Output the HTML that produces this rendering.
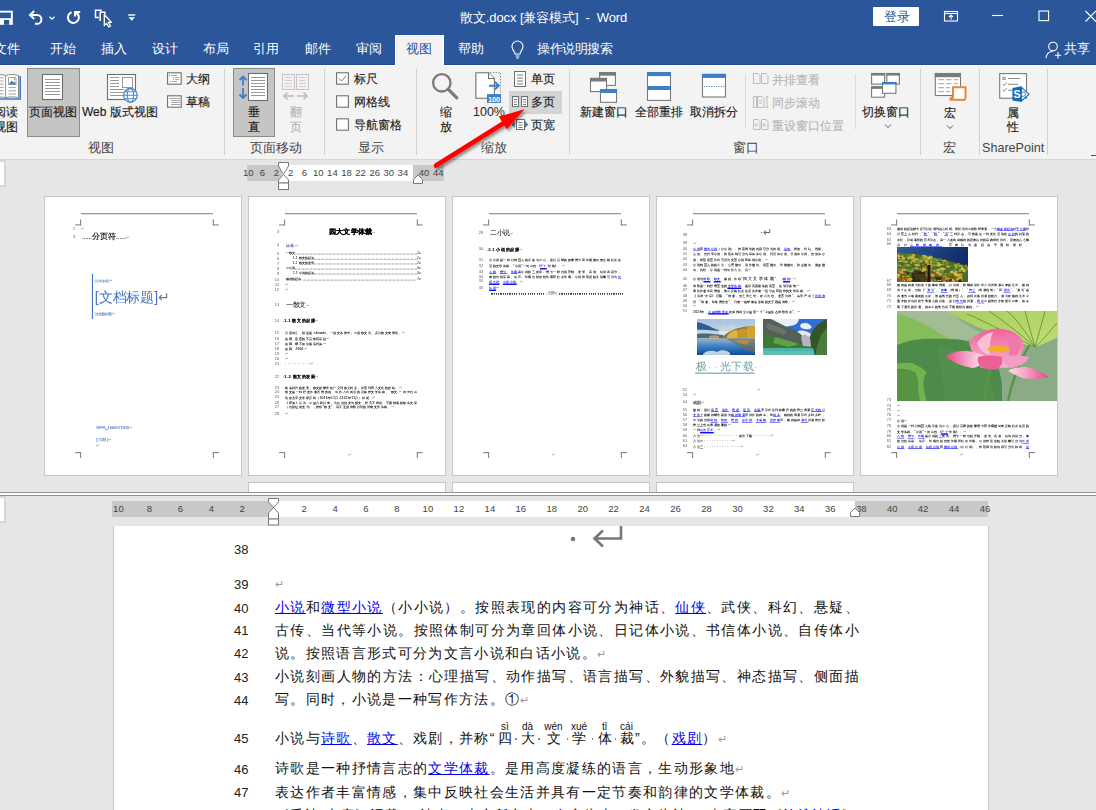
<!DOCTYPE html>
<html><head><meta charset="utf-8">
<style>
*{margin:0;padding:0;box-sizing:border-box}
html,body{width:1096px;height:810px;overflow:hidden;background:#e6e6e6;font-family:"Liberation Sans",sans-serif;position:relative}
.a{position:absolute}
.t{position:absolute;white-space:nowrap;line-height:1}
#title{left:0;top:0;width:1096px;height:65px;background:#2b579a;border-bottom:1px solid #1f4c92}
#ribbon{left:0;top:65px;width:1096px;height:95px;background:#f3f3f3;border-top:1px solid #fcfcfc;border-bottom:1px solid #d5d5d5}
.tab{position:absolute;top:43px;color:#fff;font-size:12.6px;line-height:13px;letter-spacing:-0.5px;white-space:nowrap}
.rl{position:absolute;font-size:12px;line-height:12px;color:#1a1a1a;white-space:nowrap;-webkit-text-stroke:0.15px currentColor}
.gl{position:absolute;font-size:12.6px;line-height:13px;color:#444;white-space:nowrap;top:142px}
.sep{position:absolute;top:69px;width:1px;height:86px;background:#d2d2d2}
.dis{color:#b5b5b5}
.page{position:absolute;background:#fff;border:1px solid #c6c6c6}
.rn{position:absolute;width:20px;text-align:center;font-size:9.5px;line-height:10px;color:#444;font-family:"Liberation Sans",sans-serif}
.ln{position:absolute;left:198px;width:50.5px;text-align:right;font-size:13px;line-height:13px;color:#222;margin-top:0.5px}
.dl{position:absolute;left:275px;font-size:14px;line-height:15px;letter-spacing:1.33px;color:#111;white-space:nowrap}
.dl.j{width:585px;text-align:justify;text-align-last:justify;white-space:normal;height:15px;overflow:hidden}
.lk{color:#0000ee;text-decoration:underline;text-underline-offset:1px}
.rt{color:#9a9a9a;font-size:11px}
.py{position:absolute;font-size:10px;line-height:10px;color:#111;transform:translateX(-50%);white-space:nowrap}
/*MINICSS*/
.mp{position:absolute;top:197px;width:196px;height:278px;overflow:hidden}
.sc{position:absolute;left:0;top:0;width:874px;height:1239px;transform:scale(0.2243);transform-origin:0 0}
.hl{position:absolute;left:160px;top:72px;width:589px;height:5px;background:#888}
.cm{position:absolute;width:27px;height:27px}
.mn{position:absolute;left:74px;width:60px;text-align:right;font-size:17px;line-height:16px;color:#555}
.ml{position:absolute;white-space:nowrap;line-height:1.15;letter-spacing:1.33px;color:#000;-webkit-text-stroke:0.25px currentColor}
.mp .lk{text-decoration:none;border-bottom:6px solid #0000ee}
.mp .rt{-webkit-text-stroke:0;color:#888;font-size:16px}
.ml.j{width:589px;text-align:justify;text-align-last:justify;white-space:normal;height:18px;overflow:hidden}
.toc{display:flex;align-items:flex-end}
.toc .dots{flex:1;border-bottom:3px dotted #333;margin:0 2px 3px}
/*ENDMINICSS*/
</style></head><body>
<!-- TITLE BAR -->
<div id="title" class="a"></div>
<div id="ribbon" class="a"></div>

<!-- QAT -->
<svg class="a" style="left:0;top:0" width="140" height="32" viewBox="0 0 140 32">
 <path d="M-3 10.7 H12.8 V24.8 H-3 Z" fill="#fff"/>
 <rect x="-3" y="12.6" width="13.9" height="5.6" fill="#2b579a"/>
 <rect x="4" y="20" width="5.2" height="4.8" fill="#2b579a"/>
 <rect x="-3" y="20" width="1.5" height="4.8" fill="#2b579a"/>
 <g fill="none" stroke="#fff" stroke-width="2">
  <path d="M30.5 15 H37 A4.4 4.4 0 0 1 37 23.8 H35"/>
  <path d="M34.2 11 L30 15 L34.2 19"/>
  <path d="M71.6 12.2 A5.5 5.5 0 1 0 77.3 13.5"/>
 </g>
 <path d="M49.5 16.8 L52 19.2 L54.5 16.8" fill="none" stroke="#fff" stroke-width="1.2"/>
 <path d="M80.2 12 H75 V16.6 M75 12 L78.2 15.2" fill="none" stroke="#fff" stroke-width="1.9"/>
 <g fill="none" stroke="#fff" stroke-width="1.5">
  <path d="M101 11.5 V10.2 H95.5 V17.5 H99"/>
  <path d="M100.2 21 V12.2 H104.8 V14.5"/>
 </g>
 <path d="M104.3 14.5 V25.5 L106.5 23.4 L108.8 27 L110.6 26 L108.3 22.4 H111.4 Z" fill="#2b579a" stroke="#fff" stroke-width="1.3" stroke-linejoin="round"/>
 <path d="M128.2 15 H135.2" stroke="#fff" stroke-width="1.4"/>
 <path d="M128.5 17.3 H135 L131.75 20.8 Z" fill="#fff"/>
</svg>
<div class="t" style="left:460px;top:11px;font-size:13px;color:#fff;letter-spacing:-0.1px">散文.docx [兼容模式]&nbsp; - &nbsp;Word</div>
<div class="a" style="left:873px;top:7px;width:46px;height:19px;background:#fff;border-radius:1px"></div>
<div class="t" style="left:884px;top:10px;font-size:13px;color:#2b579a">登录</div>
<svg class="a" style="left:930px;top:0" width="166" height="32" viewBox="930 0 166 32">
 <g fill="none" stroke="#fff" stroke-width="1.1">
  <rect x="944.5" y="11.5" width="13" height="9.5"/>
  <path d="M944.5 13.5 H957.5"/>
  <path d="M951 19.5 V15.5 M949 17 L951 15 L953 17"/>
  <path d="M992 15.5 H1003"/>
  <rect x="1039" y="11" width="9.6" height="9.6"/>
  <path d="M1085.5 11 L1096 21.5 M1096 11 L1085.5 21.5"/>
 </g>
</svg>

<!-- RIBBON: View group -->
<svg class="a" style="left:0;top:68px" width="24" height="36" viewBox="0 68 24 36">
 <path d="M-8 75.5 C-3 74.2 2 74.2 5.6 75.6 C9 74.2 14 74.2 18.5 75.5 V97.6 C14 96.6 9 96.6 5.6 97.8 C2 96.6 -3 96.6 -8 97.6 Z" fill="#fff" stroke="#7a7a7a" stroke-width="0.9"/>
 <path d="M5.6 75.6 V97.8" stroke="#8a8a8a" stroke-width="0.9"/>
 <path d="M20.2 76 V99 H-8" fill="none" stroke="#3e7fc4" stroke-width="1.6"/>
 <rect x="8.6" y="77.6" width="7.4" height="7" fill="#fff" stroke="#8a8a8a" stroke-width="0.8"/>
 <path d="M9 84.2 L11.6 80.6 L13.4 82.4 L14.6 81.4 L15.8 84.2 Z" fill="#3e7fc4"/>
 <circle cx="14.6" cy="79.2" r="0.9" fill="#f0a030"/>
 <path d="M8.6 87.6 H16 M8.6 90.8 H16 M8.6 94 H16 M-3 77.8 H3.6 M-3 81 H3.6 M-3 84.2 H3.6 M-3 87.4 H3.6 M-3 90.6 H3.6 M-3 93.8 H3.6" stroke="#8a8a8a" stroke-width="0.8"/>
</svg>
<div class="rl" style="left:-6px;top:106px">阅读</div>
<div class="rl" style="left:-6px;top:121px">视图</div>
<div class="a" style="left:27px;top:68px;width:53px;height:69px;background:#c5c5c5;border:1px solid #8c8c8c"></div>
<svg class="a" style="left:40px;top:72px" width="26" height="30" viewBox="40 72 26 30">
 <rect x="42.5" y="74.5" width="20" height="25" fill="#fff" stroke="#6d6d6d" stroke-width="1.1"/>
 <path d="M45 79.5 H60 M45 82.5 H60 M45 85.5 H60 M45 88.5 H60 M45 91.5 H60 M45 94.5 H60" stroke="#999" stroke-width="1"/>
</svg>
<div class="rl" style="left:29px;top:106px">页面视图</div>
<svg class="a" style="left:104px;top:72px" width="36" height="34" viewBox="104 72 36 34">
 <rect x="107.5" y="74.5" width="28" height="25" fill="#fff" stroke="#6d6d6d" stroke-width="1.1"/>
 <rect x="122.5" y="77.5" width="10" height="10" fill="#fff" stroke="#999"/>
 <path d="M110 77.5 H119 M110 80.5 H119 M110 83.5 H119 M110 86.5 H119 M110 89.5 H124 M110 92.5 H124 M110 95.5 H124" stroke="#999"/>
 <circle cx="130.4" cy="95.3" r="6.8" fill="#fff" stroke="#4a86c8" stroke-width="1.3"/>
 <path d="M123.6 95.3 H137.2 M124.8 91.8 H136 M124.8 98.8 H136" stroke="#4a86c8" stroke-width="1.1"/>
 <ellipse cx="130.4" cy="95.3" rx="3.2" ry="6.8" fill="none" stroke="#4a86c8" stroke-width="1.1"/>
</svg>
<div class="rl" style="left:82px;top:106px">Web 版式视图</div>
<svg class="a" style="left:166px;top:71px" width="18" height="40" viewBox="166 71 18 40">
 <rect x="167.6" y="72.8" width="13.6" height="11.4" fill="#fff" stroke="#6d6d6d" stroke-width="1.1"/>
 <g stroke="#8a8a8a" stroke-width="0.8">
  <path d="M171 75.4 H177 M175 77.4 H179 M175 79.4 H179 M172 81.5 H177"/>
  <path d="M169 75.4 H170 M172.8 77.4 H173.8 M172.8 79.4 H173.8 M169.9 81.5 H170.9" stroke-width="1"/>
 </g>
 <rect x="167.6" y="95.8" width="13.6" height="11.4" fill="#fff" stroke="#6d6d6d" stroke-width="1.1"/>
 <path d="M169 98.4 H180 M171 100.4 H180 M171 102.4 H180 M171 104.5 H180" stroke="#8a8a8a" stroke-width="0.8"/>
</svg>
<div class="rl" style="left:186px;top:73px">大纲</div>
<div class="rl" style="left:186px;top:96px">草稿</div>
<div class="gl" style="left:87.5px">视图</div>
<div class="sep" style="left:224px"></div>
<!-- Page movement -->
<div class="a" style="left:233px;top:68px;width:42px;height:69px;background:#c5c5c5;border:1px solid #8c8c8c"></div>
<svg class="a" style="left:236px;top:71px" width="36" height="32" viewBox="236 71 36 32">
 <rect x="248.5" y="73.5" width="19" height="27" fill="#fff" stroke="#6d6d6d" stroke-width="1.1"/>
 <path d="M251 77.5 H265 M251 80.5 H265 M251 83.5 H265 M251 86.5 H265 M251 89.5 H265 M251 92.5 H265 M251 95.5 H265" stroke="#999"/>
 <path d="M243 76.5 V85.5 M243 88 V98 M239.5 80 L243 76.5 L246.5 80 M239.5 94.5 L243 98 L246.5 94.5" fill="none" stroke="#3e7fc4" stroke-width="1.8"/>
</svg>
<div class="rl" style="left:248px;top:106px">垂</div>
<div class="rl" style="left:248px;top:121px">直</div>
<svg class="a" style="left:280px;top:72px" width="32" height="30" viewBox="280 72 32 30">
 <rect x="282.5" y="74.5" width="12" height="15" fill="#f8eff6" stroke="#c4c4c4"/>
 <rect x="296.5" y="74.5" width="12" height="15" fill="#f8eff6" stroke="#c4c4c4"/>
 <path d="M285 77.5 H292 M285 80.5 H292 M285 83.5 H292 M285 86.5 H292 M299 77.5 H306 M299 80.5 H306 M299 83.5 H306 M299 86.5 H306" stroke="#d2d2d2"/>
 <path d="M284 96 H294 M287.5 92.5 L284 96 L287.5 99.5 M297 96 H307 M303.5 92.5 L307 96 L303.5 99.5" fill="none" stroke="#bcbcbc" stroke-width="1.7"/>
</svg>
<div class="rl dis" style="left:290px;top:106px">翻</div>
<div class="rl dis" style="left:290px;top:121px">页</div>
<div class="gl" style="left:249.5px">页面移动</div>
<div class="sep" style="left:324px"></div>
<!-- Show -->
<svg class="a" style="left:335px;top:71px" width="16" height="62" viewBox="335 71 16 62">
 <rect x="336.6" y="72.8" width="11.8" height="11.4" fill="#fff" stroke="#707070" stroke-width="1.1"/>
 <path d="M339 78.5 L341.5 81 L346.3 75.8" fill="none" stroke="#666" stroke-width="0.9"/>
 <rect x="336.6" y="95.8" width="11.8" height="11.4" fill="#fff" stroke="#707070" stroke-width="1.1"/>
 <rect x="336.6" y="118.8" width="11.8" height="11.4" fill="#fff" stroke="#707070" stroke-width="1.1"/>
</svg>
<div class="rl" style="left:354px;top:73px">标尺</div>
<div class="rl" style="left:354px;top:96px">网格线</div>
<div class="rl" style="left:354px;top:119px">导航窗格</div>
<div class="gl" style="left:357.5px">显示</div>
<div class="sep" style="left:416px"></div>
<!-- Zoom -->
<svg class="a" style="left:430px;top:72px" width="32" height="30" viewBox="0 0 32 30">
 <circle cx="11.8" cy="10.8" r="8.7" fill="none" stroke="#7a7a7a" stroke-width="2.3"/>
 <path d="M18.3 17.3 L26.8 25.8" stroke="#7a7a7a" stroke-width="3.3" stroke-linecap="round"/>
</svg>
<div class="rl" style="left:440px;top:106px">缩</div>
<div class="rl" style="left:440px;top:121px">放</div>
<svg class="a" style="left:472px;top:70px" width="32" height="34" viewBox="472 70 32 34">
 <path d="M475.9 72.7 H488.6 L494.4 78.5 V98.2 H475.9 Z" fill="#fff" stroke="#6d6d6d" stroke-width="1.1"/>
 <path d="M488.6 72.7 V78.5 H494.4" fill="#fff" stroke="#6d6d6d" stroke-width="1.1"/>
 <path d="M490 72.6 H500.5 V93" fill="none" stroke="#8a8a8a" stroke-width="1" stroke-dasharray="1.4 1.4"/>
 <path d="M494.4 86 V93" fill="none" stroke="#8a8a8a" stroke-width="1" stroke-dasharray="1.4 1.4"/>
 <path d="M489 85.7 H498 M495 82 L498.8 85.7 L495 89.4" fill="none" stroke="#3e7fc4" stroke-width="1.9"/>
 <rect x="487" y="94.1" width="14" height="8.8" fill="#3e7fc4"/>
 <text x="494" y="101.6" font-size="7.6" fill="#fff" text-anchor="middle" font-family="Liberation Sans" font-weight="bold" letter-spacing="-0.3">100</text>
</svg>
<div class="t" style="left:473px;top:106px;font-size:12.5px;color:#262626">100%</div>
<svg class="a" style="left:512px;top:70px" width="18" height="62" viewBox="0 0 18 62">
 <rect x="2.5" y="1.5" width="11" height="15" fill="#fff" stroke="#6d6d6d"/>
 <path d="M5 5 H11 M5 8 H11 M5 11 H11 M5 14 H11" stroke="#7a7a7a"/>
 <path d="M22 51 H22" stroke="#000"/>
 <path d="M-0.5 54.5 L2.8 51 V58 Z M16.3 54.5 L13 51 V58 Z" fill="#3e7fc4"/>
 <rect x="4.5" y="49.5" width="8" height="10" fill="#fff" stroke="#6d6d6d"/>
 <path d="M6.5 52.5 H10.5 M6.5 55 H10.5 M6.5 57.5 H10.5" stroke="#7a7a7a"/>
</svg>
<div class="a" style="left:509px;top:91px;width:53px;height:23px;background:#d4d4d4"></div>
<svg class="a" style="left:511px;top:95px" width="18" height="13" viewBox="0 0 18 13">
 <rect x="1.5" y="1.5" width="6" height="10" fill="#fff" stroke="#6d6d6d"/>
 <rect x="10.5" y="1.5" width="6" height="10" fill="#fff" stroke="#6d6d6d"/>
 <path d="M3 4.5 H6 M3 7 H6 M3 9.5 H6 M12 4.5 H15 M12 7 H15 M12 9.5 H15" stroke="#7a7a7a"/>
</svg>
<div class="rl" style="left:531px;top:73px">单页</div>
<div class="rl" style="left:531px;top:96px">多页</div>
<div class="rl" style="left:531px;top:119px">页宽</div>
<div class="gl" style="left:480.5px">缩放</div>
<div class="sep" style="left:569px"></div>
<!-- Window -->
<svg class="a" style="left:588px;top:70px" width="32" height="34" viewBox="588 70 32 34">
 <rect x="599.6" y="72.6" width="15.8" height="12.8" fill="#fff" stroke="#7a7a7a" stroke-width="1.1"/>
 <rect x="599.1" y="72.1" width="16.8" height="3.6" fill="#7a7a7a"/>
 <rect x="590.5" y="78.4" width="16" height="13.2" fill="#fff" stroke="#7a7a7a" stroke-width="1.1"/>
 <rect x="590" y="77.9" width="17" height="3.6" fill="#7a7a7a"/>
 <rect x="600.5" y="89.7" width="16" height="12.6" fill="#fff" stroke="#7a7a7a" stroke-width="1.1"/>
 <rect x="600" y="89.2" width="17" height="3.8" fill="#3e7fc4"/>
</svg>
<div class="rl" style="left:580px;top:106px">新建窗口</div>
<svg class="a" style="left:645px;top:70px" width="28" height="32" viewBox="645 70 28 32">
 <rect x="647.5" y="72.6" width="23" height="27.8" fill="#fff" stroke="#7a7a7a" stroke-width="1.1"/>
 <rect x="647" y="72.1" width="24" height="4" fill="#3e7fc4"/>
 <rect x="647" y="86" width="24" height="4" fill="#3e7fc4"/>
</svg>
<div class="rl" style="left:635px;top:106px">全部重排</div>
<svg class="a" style="left:700px;top:72px" width="28" height="28" viewBox="700 72 28 28">
 <rect x="702.5" y="74.4" width="23" height="22.6" fill="#fff" stroke="#7a7a7a" stroke-width="1.1"/>
 <rect x="702" y="73.9" width="24" height="4" fill="#3e7fc4"/>
 <path d="M704 86.5 H725" stroke="#3e7fc4" stroke-width="1" stroke-dasharray="1.1 1.3"/>
</svg>
<div class="rl" style="left:690px;top:106px">取消拆分</div>
<div class="a" style="left:745px;top:74px;width:1px;height:55px;background:#dadada"></div>
<svg class="a" style="left:752px;top:72px" width="18" height="60" viewBox="752 72 18 60">
 <g fill="#f6eff5" stroke="#bdbdbd" stroke-width="1">
  <path d="M753.5 73.5 H758 L760 75.5 V83.5 H753.5 Z"/><path d="M761.5 73.5 H766 L768 75.5 V83.5 H761.5 Z"/>
  <path d="M753.5 96.5 H756.5 V107.5 H753.5 Z"/><path d="M757.5 96.5 H762 L764 98.5 V107.5 H757.5 Z"/>
  <path d="M753.5 119.5 H758 L760 121.5 V129.5 H753.5 Z"/><path d="M761.5 119.5 H766 L768 121.5 V129.5 H761.5 Z"/>
 </g>
 <path d="M759 100.5 H762 M759 103 H762 M767 96 V108 M765.5 97.5 L767 96 L768.5 97.5 M765.5 106.5 L767 108 L768.5 106.5 M754.5 125 H758 M756.2 123.3 V126.7 M762.5 125 H766 M764.2 123.3 V126.7" fill="none" stroke="#bdbdbd" stroke-width="0.9"/>
</svg>
<div class="rl dis" style="left:772px;top:74px">并排查看</div>
<div class="rl dis" style="left:772px;top:97px">同步滚动</div>
<div class="rl dis" style="left:772px;top:120px">重设窗口位置</div>
<div class="gl" style="left:732.5px">窗口</div>
<div class="a" style="left:855px;top:74px;width:1px;height:55px;background:#dadada"></div>
<svg class="a" style="left:869px;top:71px" width="34" height="30" viewBox="869 71 34 30">
 <rect x="871.6" y="73.5" width="13" height="10.6" fill="#fff" stroke="#7a7a7a" stroke-width="1.1"/><rect x="871.1" y="73" width="14" height="2.6" fill="#7a7a7a"/>
 <rect x="886.8" y="73.5" width="12.6" height="10.6" fill="#fff" stroke="#7a7a7a" stroke-width="1.1"/><rect x="886.3" y="73" width="13.6" height="2.6" fill="#7a7a7a"/>
 <rect x="871.6" y="86.8" width="13" height="10.4" fill="#fff" stroke="#7a7a7a" stroke-width="1.1"/><rect x="871.1" y="86.3" width="14" height="2.6" fill="#7a7a7a"/>
 <rect x="882.5" y="82.5" width="13.4" height="10.8" fill="#fff" stroke="#7a7a7a" stroke-width="1.1"/><rect x="882" y="82" width="14.4" height="2.4" fill="#3e7fc4"/>
</svg>
<div class="rl" style="left:862px;top:106px">切换窗口</div>
<svg class="a" style="left:883px;top:123px" width="10" height="6" viewBox="0 0 10 6"><path d="M2 1.5 L5 4.5 L8 1.5" fill="none" stroke="#555"/></svg>
<div class="sep" style="left:920px"></div>
<!-- Macro -->
<svg class="a" style="left:933px;top:71px" width="36" height="32" viewBox="933 71 36 32">
 <rect x="935.3" y="73.5" width="25.2" height="22" fill="#fff" stroke="#7a7a7a" stroke-width="1.1"/>
 <rect x="934.8" y="73" width="26.2" height="4.2" fill="#7a7a7a"/>
 <path d="M938 79.7 H944 M946 79.7 H951.5 M953.5 79.7 H958 M938 83.7 H944 M946 83.7 H951.5 M953.5 83.7 H958 M938 87.7 H944 M946 87.7 H950 M938 91.7 H944 M946 91.7 H950" stroke="#9a9a9a" stroke-width="0.9"/>
 <path d="M953 87.2 H965.5 V97.5 C965.5 99.8 963.5 100.4 961.5 99.8 H952 C950 100.2 949.5 98.5 951.3 97.6 H953 Z" fill="#fff" stroke="#e8883a" stroke-width="2"/>
</svg>
<div class="rl" style="left:944px;top:107px">宏</div>
<svg class="a" style="left:945px;top:124px" width="10" height="6" viewBox="0 0 10 6"><path d="M2 1.5 L5 4.5 L8 1.5" fill="none" stroke="#555"/></svg>
<div class="gl" style="left:943px">宏</div>
<div class="sep" style="left:979px"></div>
<!-- SharePoint -->
<svg class="a" style="left:997px;top:71px" width="36" height="34" viewBox="997 71 36 34">
 <rect x="999.7" y="73.6" width="26.8" height="24.6" fill="#fff" stroke="#7a7a7a" stroke-width="1.1"/>
 <rect x="1003" y="77.3" width="2.2" height="2.2" fill="none" stroke="#7a7a7a" stroke-width="0.8"/>
 <path d="M1008 78.5 H1020 M1008 84.3 H1018 M1008 90.2 H1012 M1002.5 84 L1004 85.6 L1006.8 82.4 M1002.5 89.8 L1004 91.4 L1006.8 88.2" fill="none" stroke="#7a7a7a" stroke-width="0.9"/>
 <path d="M1012.4 88 L1021.5 86.3 V102.1 L1012.4 100.4 Z" fill="#0f6cbd"/>
 <path d="M1021.5 87.4 L1029 94.2 L1021.5 101 Z" fill="#fff" stroke="#0f6cbd" stroke-width="1.1"/>
 <circle cx="1023.3" cy="94.2" r="2.2" fill="#fff" stroke="#0f6cbd" stroke-width="0.9"/>
 <text x="1013.6" y="98.3" font-size="10.5" font-weight="bold" fill="#fff" font-family="Liberation Sans">S</text>
</svg>
<div class="rl" style="left:1007px;top:107px">属</div>
<div class="rl" style="left:1007px;top:121px">性</div>
<div class="t" style="left:982px;top:142px;font-size:12.6px;color:#444">SharePoint</div>
<div class="sep" style="left:1047px"></div>
<div class="a" style="left:1091px;top:155px;width:5px;height:1px;background:#555"></div>

<!-- DOC -->
<div class="a" style="left:-6px;top:160px;width:12px;height:27px;background:#fff;border:2px solid #d6d6d6"></div>
<div class="a" style="left:247px;top:165px;width:197px;height:16px;background:#c8c8c8"></div>
<div class="a" style="left:282px;top:165px;width:131px;height:16px;background:#fff"></div>
<div class="rn" style="left:238.2px;top:168px">10</div>
<div class="rn" style="left:252.4px;top:168px">6</div>
<div class="rn" style="left:266.4px;top:168px">2</div>
<div class="rn" style="left:280.6px;top:168px">2</div>
<div class="rn" style="left:294.5px;top:168px">6</div>
<div class="rn" style="left:308.3px;top:168px">10</div>
<div class="rn" style="left:322.4px;top:168px">14</div>
<div class="rn" style="left:336.5px;top:168px">18</div>
<div class="rn" style="left:350.6px;top:168px">22</div>
<div class="rn" style="left:364.7px;top:168px">26</div>
<div class="rn" style="left:378.8px;top:168px">30</div>
<div class="rn" style="left:392.9px;top:168px">34</div>
<div class="rn" style="left:414.0px;top:168px">40</div>
<div class="rn" style="left:428.2px;top:168px">44</div>
<svg class="a" style="left:277px;top:161px" width="13" height="30" viewBox="0 0 13 30">
<path d="M1.5 1.5 H11.5 V5 L6.5 13.5 L1.5 5 Z" fill="#fff" stroke="#7a7a7a"/>
<path d="M6.5 13.5 L11.5 19 V22 H1.5 V19 Z" fill="#fff" stroke="#7a7a7a"/>
<rect x="1.5" y="22" width="10" height="6.5" fill="#fff" stroke="#7a7a7a"/>
</svg>
<svg class="a" style="left:412px;top:174px" width="13" height="11" viewBox="0 0 13 11">
<path d="M1.5 9.5 V5.5 L6 1 L10.5 5.5 V9.5 Z" fill="#fff" stroke="#7a7a7a"/>
</svg>
<div class="page" style="left:44px;top:196px;width:198px;height:280px"></div>
<div class="page" style="left:248px;top:196px;width:198px;height:280px"></div>
<div class="page" style="left:452px;top:196px;width:198px;height:280px"></div>
<div class="page" style="left:656px;top:196px;width:198px;height:280px"></div>
<div class="page" style="left:860px;top:196px;width:198px;height:280px"></div>
<div class="page" style="left:248px;top:482px;width:198px;height:20px"></div>
<div class="page" style="left:452px;top:482px;width:198px;height:20px"></div>
<div class="page" style="left:656px;top:482px;width:198px;height:20px"></div>
<div class="a" style="left:0;top:492px;width:1096px;height:4px;background:#fff;border-top:1px solid #8b939b;border-bottom:1px solid #8b939b"></div>
<div class="a" style="left:0;top:496px;width:1096px;height:314px;background:#e6e6e6"></div>
<div class="a" style="left:-6px;top:496px;width:12px;height:27px;background:#fff;border:2px solid #d6d6d6"></div>
<div class="a" style="left:112px;top:501px;width:876px;height:16px;background:#c8c8c8"></div>
<div class="a" style="left:273px;top:501px;width:582px;height:16px;background:#fff"></div>
<div class="rn" style="left:108.4px;top:504px">10</div>
<div class="rn" style="left:139.4px;top:504px">8</div>
<div class="rn" style="left:170.3px;top:504px">6</div>
<div class="rn" style="left:201.3px;top:504px">4</div>
<div class="rn" style="left:232.2px;top:504px">2</div>
<div class="rn" style="left:294.1px;top:504px">2</div>
<div class="rn" style="left:325.1px;top:504px">4</div>
<div class="rn" style="left:356.0px;top:504px">6</div>
<div class="rn" style="left:387.0px;top:504px">8</div>
<div class="rn" style="left:417.9px;top:504px">10</div>
<div class="rn" style="left:448.9px;top:504px">12</div>
<div class="rn" style="left:479.9px;top:504px">14</div>
<div class="rn" style="left:510.8px;top:504px">16</div>
<div class="rn" style="left:541.8px;top:504px">18</div>
<div class="rn" style="left:572.7px;top:504px">20</div>
<div class="rn" style="left:603.6px;top:504px">22</div>
<div class="rn" style="left:634.6px;top:504px">24</div>
<div class="rn" style="left:665.5px;top:504px">26</div>
<div class="rn" style="left:696.5px;top:504px">28</div>
<div class="rn" style="left:727.5px;top:504px">30</div>
<div class="rn" style="left:758.4px;top:504px">32</div>
<div class="rn" style="left:789.3px;top:504px">34</div>
<div class="rn" style="left:820.3px;top:504px">36</div>
<div class="rn" style="left:851.2px;top:504px">38</div>
<div class="rn" style="left:882.2px;top:504px">40</div>
<div class="rn" style="left:913.1px;top:504px">42</div>
<div class="rn" style="left:944.1px;top:504px">44</div>
<div class="rn" style="left:975.0px;top:504px">46</div>
<svg class="a" style="left:267px;top:497px" width="13" height="30" viewBox="0 0 13 30">
<path d="M1.5 1.5 H11.5 V5 L6.5 10.5 L1.5 5 Z" fill="#fff" stroke="#7a7a7a"/>
<path d="M6.5 10.5 L11.5 16 V22 H1.5 V16 Z" fill="#fff" stroke="#7a7a7a"/>
<rect x="1.5" y="22" width="10" height="6" fill="#fff" stroke="#7a7a7a"/>
</svg>
<svg class="a" style="left:849px;top:507px" width="13" height="11" viewBox="0 0 13 11">
<path d="M1.5 9.5 V5.5 L6 1 L10.5 5.5 V9.5 Z" fill="#fff" stroke="#7a7a7a"/>
</svg>
<div class="a" style="left:113px;top:526px;width:876px;height:290px;background:#fff;border-left:1px solid #c6c6c6;border-right:1px solid #c6c6c6"></div>
<!-- MINI START -->
<div class="mp" style="left:45px"><div class="sc">
<div class="hl"></div>
<div class="cm" style="left:134px;top:100px;border-right:5px solid #888;border-bottom:5px solid #888"></div>
<div class="cm" style="left:748px;top:100px;border-left:5px solid #888;border-bottom:5px solid #888"></div>
<div class="cm" style="left:134px;top:1137px;border-right:5px solid #888;border-top:5px solid #888"></div>
<div class="cm" style="left:748px;top:1137px;border-left:5px solid #888;border-top:5px solid #888"></div>
<div class="mn" style="top:132px">2</div>
<div class="ml" style="left:161px;top:133px;font-size:14px;"><span class="rt">↵</span></div>
<div class="mn" style="top:169px">3</div>
<div class="ml" style="left:166px;top:155px;font-size:36px;-webkit-text-stroke:0;letter-spacing:0;-webkit-text-stroke:0.6px #000"><span style="font-size:26px">......</span>分页符<span style="font-size:26px">......</span><span class="rt">↵</span></div>
<div class="a" style="left:209px;top:343px;width:5px;height:201px;background:#4472c4"></div>
<div class="ml" style="left:222px;top:366px;font-size:12px;color:#4472c4;-webkit-text-stroke:0.3px #4472c4">[公司名称]<span class="rt">↵</span></div>
<div class="ml" style="left:222px;top:410px;font-size:62px;-webkit-text-stroke:0;color:#4472c4;letter-spacing:0">[文档标题]<span style="color:#777">↵</span></div>
<div class="ml" style="left:222px;top:512px;font-size:12px;color:#4472c4;-webkit-text-stroke:0.3px #4472c4">[文档副标题]<span class="rt">↵</span></div>
<div class="ml" style="left:229px;top:1019px;font-size:19px;color:#4472c4;letter-spacing:-1px">WPS_1666571920<span class="rt">↵</span></div>
<div class="ml" style="left:229px;top:1070px;font-size:19px;color:#4472c4">[日期]<span class="rt">↵</span></div>
<div class="ml" style="left:229px;top:1102px;font-size:14px;"><span class="rt">↵</span></div>
</div></div>
<div class="mp" style="left:249px"><div class="sc">
<div class="hl"></div>
<div class="cm" style="left:134px;top:100px;border-right:5px solid #888;border-bottom:5px solid #888"></div>
<div class="cm" style="left:748px;top:100px;border-left:5px solid #888;border-bottom:5px solid #888"></div>
<div class="cm" style="left:134px;top:1137px;border-right:5px solid #888;border-top:5px solid #888"></div>
<div class="cm" style="left:748px;top:1137px;border-left:5px solid #888;border-top:5px solid #888"></div>
<div class="mn" style="top:148px">3</div>
<div class="ml" style="left:357px;top:139px;font-size:31px;-webkit-text-stroke:0;letter-spacing:1px;-webkit-text-stroke:1.4px #000"><b>四大文学体裁</b><span class="rt">↵</span></div>
<div class="mn" style="top:206px">4</div>
<div class="ml" style="left:164px;top:204px;font-size:19px;"><span style="color:#2f5496">目录</span><span class="rt">↵</span></div>
<div class="mn" style="top:244px">5</div>
<div class="ml toc" style="left:164px;top:245px;width:606px;font-size:12px"><span>一散文</span><span class="dots"></span><span>2↵</span></div>
<div class="mn" style="top:267px">6</div>
<div class="ml toc" style="left:196px;top:268px;width:574px;font-size:12px"><span>1.1 散文的起源</span><span class="dots"></span><span>2↵</span></div>
<div class="mn" style="top:288px">7</div>
<div class="ml toc" style="left:196px;top:289px;width:574px;font-size:12px"><span>1.2 散文的发展</span><span class="dots"></span><span>2↵</span></div>
<div class="mn" style="top:311px">8</div>
<div class="ml toc" style="left:164px;top:312px;width:606px;font-size:12px"><span>二小说</span><span class="dots"></span><span>3↵</span></div>
<div class="mn" style="top:333px">9</div>
<div class="ml toc" style="left:196px;top:334px;width:574px;font-size:12px"><span>2.1 小说的起源</span><span class="dots"></span><span>3↵</span></div>
<div class="mn" style="top:360px">10</div>
<div class="ml toc" style="left:164px;top:361px;width:606px;font-size:12px"><span>戏剧的起源</span><span class="dots"></span><span>7↵</span></div>
<div class="mn" style="top:382px">11</div>
<div class="ml" style="left:161px;top:382px;font-size:14px;"><span class="rt">↵</span></div>
<div class="mn" style="top:404px">12</div>
<div class="ml" style="left:161px;top:404px;font-size:14px;"><span class="rt">↵</span></div>
<div class="mn" style="top:473px">13</div>
<div class="ml" style="left:164px;top:466px;font-size:29px;-webkit-text-stroke:0;">一散文<span class="rt">↵</span></div>
<div class="mn" style="top:543px">14</div>
<div class="ml" style="left:150px;top:541px;font-size:19px;"><b>.1.1 散文的起源</b><span class="rt">↵</span></div>
<div class="mn" style="top:598px">15</div>
<div class="ml" style="left:161px;top:599px;font-size:14px;">汉语词汇，拼音是 sǎnwén，一指文体类型；二指散文为，多以散文来表现。<span class="rt">↵</span></div>
<div class="mn" style="top:624px">16</div>
<div class="ml" style="left:161px;top:624px;font-size:14px;">金额、意思的不完全程序起<span class="rt">↵</span></div>
<div class="mn" style="top:645px">17</div>
<div class="ml" style="left:161px;top:645px;font-size:14px;">金额、概不如何最后判决<span class="rt">↵</span></div>
<div class="mn" style="top:668px">18</div>
<div class="ml" style="left:161px;top:668px;font-size:14px;">金额、2500<span class="rt">↵</span></div>
<div class="mn" style="top:690px">19</div>
<div class="ml" style="left:161px;top:690px;font-size:14px;"><span class="rt">↵</span></div>
<div class="mn" style="top:713px">20</div>
<div class="ml" style="left:161px;top:713px;font-size:14px;"><span class="rt">↵</span></div>
<div class="mn" style="top:737px">21</div>
<div class="ml" style="left:161px;top:737px;font-size:14px;">· · · · · · · · · · <span class="rt">↵</span></div>
<div class="mn" style="top:793px">22</div>
<div class="ml" style="left:150px;top:790px;font-size:19px;"><b>·1.2 散文的发展</b><span class="rt">↵</span></div>
<div class="mn" style="top:841px">23</div>
<div class="ml" style="left:161px;top:842px;font-size:14px;">随着时代的发展，散文的概念在广义到狭义转变，并受到西方文化的影响。<span class="rt">↵</span></div>
<div class="mn" style="top:863px">24</div>
<div class="ml j" style="left:161px;top:863px;font-size:14px;">散文是一种抒发作者真情实感、写作方式灵活的记叙类文学体裁。“散文”一词大约出</div>
<div class="mn" style="top:885px">25</div>
<div class="ml" style="left:161px;top:885px;font-size:14px;">现在北宋文学家苏轼（1036年12月-1101年11月）时期。<span class="rt">↵</span></div>
<div class="mn" style="top:908px">26</div>
<div class="ml j" style="left:161px;top:908px;font-size:14px;">《辞海》认为：中国六朝以来，为区别韵文与骈文，把凡不押韵、不重排偶的散体文章</div>
<div class="mn" style="top:926px">27</div>
<div class="ml" style="left:161px;top:927px;font-size:14px;">（包括经传史书），统称“散文”。后又泛指诗歌以外的所有文学体裁。<span class="rt">↵</span></div>
<div class="mn" style="top:958px">28</div>
<div class="ml" style="left:161px;top:958px;font-size:14px;"><span class="rt">↵</span></div>
<div class="ml" style="left:440px;top:1140px;font-size:14px"><span class="rt">↵</span></div>
</div></div>
<div class="mp" style="left:453px"><div class="sc">
<div class="hl"></div>
<div class="cm" style="left:134px;top:100px;border-right:5px solid #888;border-bottom:5px solid #888"></div>
<div class="cm" style="left:748px;top:100px;border-left:5px solid #888;border-bottom:5px solid #888"></div>
<div class="cm" style="left:134px;top:1137px;border-right:5px solid #888;border-top:5px solid #888"></div>
<div class="cm" style="left:748px;top:1137px;border-left:5px solid #888;border-top:5px solid #888"></div>
<div class="mn" style="top:150px">29</div>
<div class="ml" style="left:164px;top:142px;font-size:29px;-webkit-text-stroke:0;">二小说<span class="rt">↵</span></div>
<div class="mn" style="top:225px">30</div>
<div class="ml" style="left:150px;top:223px;font-size:19px;"><b>.2.1 小说的起源</b><span class="rt">↵</span></div>
<div class="mn" style="top:273px">31</div>
<div class="ml j" style="left:161px;top:273px;font-size:14px;">①小说是一种以刻画人物形象为中心，通过完整的故事情节和环境描写来反映社会生</div>
<div class="mn" style="top:300px">32</div>
<div class="ml" style="left:161px;top:300px;font-size:14px;">活的文学体裁。“小说”一词出自《<span class="lk">庄子</span>·外物》。<span class="rt">↵</span></div>
<div class="mn" style="top:324px">33</div>
<div class="ml j" style="left:161px;top:324px;font-size:14px;"><span class="lk">人物</span>、<span class="lk">情节</span>、<span class="lk">环境</span>是小说的三要素。情节一般包括开端、发展、高潮、结局四部分，</div>
<div class="mn" style="top:347px">34</div>
<div class="ml j" style="left:161px;top:347px;font-size:14px;">有的包括序幕、尾声。环境包括自然环境和社会环境。小说按照篇幅及容量可分为<span class="lk">长</span></div>
<div class="mn" style="top:368px">35</div>
<div class="ml" style="left:161px;top:369px;font-size:14px;"><span class="lk">篇小说</span>、<span class="lk">中篇小说</span>、<span class="rt">↵</span></div>
<div class="mn" style="top:395px">36</div>
<div class="ml" style="left:161px;top:396px;font-size:14px;"><span class="lk">短篇</span><span class="rt">↵</span></div>
<div class="a" style="left:168px;top:429px;width:590px;height:6px;background:repeating-linear-gradient(90deg,#000 0 4px,transparent 4px 8px)"></div>
<div class="ml" style="left:416px;top:422px;font-size:13px;background:#fff;padding:0 6px;color:#444">分页符</div>
<div class="ml" style="left:440px;top:1140px;font-size:14px"><span class="rt">↵</span></div>
</div></div>
<div class="mp" style="left:657px"><div class="sc">
<div class="hl"></div>
<div class="cm" style="left:134px;top:100px;border-right:5px solid #888;border-bottom:5px solid #888"></div>
<div class="cm" style="left:748px;top:100px;border-left:5px solid #888;border-bottom:5px solid #888"></div>
<div class="cm" style="left:134px;top:1137px;border-right:5px solid #888;border-top:5px solid #888"></div>
<div class="cm" style="left:748px;top:1137px;border-left:5px solid #888;border-top:5px solid #888"></div>
<div class="ml" style="left:458px;top:129px;font-size:50px;color:#666;letter-spacing:0;-webkit-text-stroke:0">·↵</div>
<div class="mn" style="top:163px">38</div>
<div class="mn" style="top:198px">39</div>
<div class="ml" style="left:161px;top:199px;font-size:14px;"><span class="rt">↵</span></div>
<div class="mn" style="top:223px">40</div>
<div class="ml j" style="left:161px;top:223px;font-size:14px;"><span class="lk">小说</span>和<span class="lk">微型小说</span>（小小说）。按照表现的内容可分为神话、<span class="lk">仙侠</span>、武侠、科幻、悬疑、</div>
<div class="mn" style="top:245px">41</div>
<div class="ml j" style="left:161px;top:246px;font-size:14px;">古传、当代等小说。按照体制可分为章回体小说、日记体小说、书信体小说、自传体小</div>
<div class="mn" style="top:270px">42</div>
<div class="ml" style="left:161px;top:270px;font-size:14px;">说。按照语言形式可分为文言小说和白话小说。<span class="rt">↵</span></div>
<div class="mn" style="top:293px">43</div>
<div class="ml j" style="left:161px;top:294px;font-size:14px;">小说刻画人物的方法：心理描写、动作描写、语言描写、外貌描写、神态描写、侧面描</div>
<div class="mn" style="top:316px">44</div>
<div class="ml" style="left:161px;top:316px;font-size:14px;">写。同时，小说是一种写作方法。①<span class="rt">↵</span></div>
<div class="mn" style="top:355px">45</div>
<div class="ml" style="left:161px;top:355px;font-size:14px;">小说与<span class="lk">诗歌</span>、<span class="lk">散文</span>、戏剧，并称“<span style="font-size:19px;letter-spacing:5px">四大文学体裁</span>”。（<span class="lk">戏剧</span>）<span class="rt">↵</span></div>
<div class="mn" style="top:387px">46</div>
<div class="ml" style="left:161px;top:387px;font-size:14px;">诗歌是一种抒情言志的<span class="lk">文学体裁</span>。是用高度凝练的语言，生动形象地<span class="rt">↵</span></div>
<div class="mn" style="top:408px">47</div>
<div class="ml" style="left:161px;top:409px;font-size:14px;">表达作者丰富情感，集中反映社会生活并具有一定节奏和韵律的文学体裁。<span class="rt">↵</span></div>
<div class="mn" style="top:431px">48</div>
<div class="ml j" style="left:161px;top:431px;font-size:14px;">《毛诗·大序》记载：“诗者，志之所之也，在心为志，发言为诗”。南宋严羽《<span class="lk">沧浪诗话</span>》</div>
<div class="mn" style="top:457px">49</div>
<div class="ml" style="left:161px;top:457px;font-size:14px;">云：“诗者，吟咏情性也”。只有一些带有着浓郁的文字题是诗歌。<span class="rt">↵</span></div>
<div class="mn" style="top:478px">50</div>
<div class="ml" style="left:161px;top:478px;font-size:14px;"><span class="rt">↵</span></div>
<div class="mn" style="top:500px">51</div>
<div class="ml" style="left:161px;top:501px;font-size:14px;">2023年，<span class="lk">中国诗歌学会</span>在成都成立中国第一个“中国生态诗歌协会”。<span class="rt">↵</span></div>
<div class="ml" style="left:172px;top:726px;font-size:51px;color:#6fa3a8;letter-spacing:0;-webkit-text-stroke:0">极<span style='display:inline-block;width:58px;font-size:30px;letter-spacing:16px;padding-left:6px'>··</span>光下载<span style='font-size:30px'>·</span></div>
<div class="a" style="left:170px;top:783px;width:265px;height:5px;background:#6fa3a8"></div>
<div class="mn" style="top:852px">52</div>
<div class="ml" style="left:448px;top:852px;font-size:14px"><span class="rt">↵</span></div>
<div class="mn" style="top:873px">53</div>
<div class="ml" style="left:161px;top:873px;font-size:14px;"><span class="rt">↵</span></div>
<div class="mn" style="top:907px">54</div>
<div class="ml" style="left:161px;top:906px;font-size:17px;">戏剧<span class="rt">↵</span></div>
<div class="mn" style="top:939px">55</div>
<div class="ml j" style="left:161px;top:940px;font-size:14px;">戏剧，指以<span class="lk">语言</span>、<span class="lk">动作</span>、<span class="lk">舞蹈</span>、<span class="lk">音乐</span>、<span class="lk">木偶</span>等形式达到叙事目的的舞台表演<span class="lk">艺术的</span>总称。</div>
<div class="mn" style="top:962px">56</div>
<div class="ml j" style="left:161px;top:962px;font-size:14px;"><span class="lk">文学</span>上的戏剧概念是指为<span class="lk">戏剧表演</span>所创作的脚本，即<span class="lk">剧本</span>。戏剧的表演形式多种多样，</div>
<div class="mn" style="top:986px">57</div>
<div class="ml j" style="left:161px;top:987px;font-size:14px;">常见的包括<span class="lk">话剧</span>、<span class="lk">歌剧</span>、<span class="lk">舞剧</span>、<span class="lk">音乐剧</span>、<span class="lk">木偶戏</span>、<span class="lk">皮影戏</span>等。戏剧是由<span class="lk">演员</span>扮演角色在</div>
<div class="mn" style="top:1008px">58</div>
<div class="ml" style="left:161px;top:1009px;font-size:14px;">舞台上当众表演故事的<span class="rt">↵</span></div>
<div class="mn" style="top:1031px">59</div>
<div class="ml" style="left:161px;top:1031px;font-size:14px;">一种<span class="lk">综合艺术</span>。<span class="rt">↵</span></div>
<div class="mn" style="top:1058px">60</div>
<div class="ml" style="left:161px;top:1058px;font-size:14px;">方法一· · · · · · · · · · · · · · 极光下载· · · · · · · <span class="rt">↵</span></div>
<div class="mn" style="top:1080px">61</div>
<div class="ml" style="left:161px;top:1080px;font-size:14px;">方法二：· · · · · · · · · · <span class="rt">↵</span></div>
<div class="mn" style="top:1103px">62</div>
<div class="ml" style="left:161px;top:1104px;font-size:14px;">方法三：· · · · · · · · · · · · · <span class="rt">↵</span></div>
<div class="ml" style="left:440px;top:1140px;font-size:14px"><span class="rt">↵</span></div>
</div></div>
<div class="mp" style="left:861px"><div class="sc">
<div class="hl"></div>
<div class="cm" style="left:134px;top:100px;border-right:5px solid #888;border-bottom:5px solid #888"></div>
<div class="cm" style="left:748px;top:100px;border-left:5px solid #888;border-bottom:5px solid #888"></div>
<div class="cm" style="left:134px;top:1137px;border-right:5px solid #888;border-top:5px solid #888"></div>
<div class="cm" style="left:748px;top:1137px;border-left:5px solid #888;border-top:5px solid #888"></div>
<div class="mn" style="top:132px">63</div>
<div class="ml j" style="left:161px;top:133px;font-size:14px;letter-spacing:0">戏剧的起源据考证可以追溯到远古时期。祭祀仪式中的歌舞表演，一方<span class="lk">戏曲的起源</span>始<span class="lk">于先秦</span>时代，</div>
<div class="mn" style="top:156px">64</div>
<div class="ml j" style="left:161px;top:156px;font-size:14px;letter-spacing:0">以至上古时代，“<span class="lk">歌</span>”、“<span class="lk">舞</span>”、“<span class="lk">乐</span>”三种形态，可能是巫一种文化活动在<span class="lk">原始</span>的村落的</div>
<div class="mn" style="top:181px">65</div>
<div class="ml j" style="left:161px;top:181px;font-size:14px;letter-spacing:0">会社，形成最初的艺术形态。另一方面构成戏剧的还有原始的宗教祭祀仪式，还有远古之事</div>
<div class="mn" style="top:203px">66</div>
<div class="ml j" style="left:161px;top:204px;font-size:14px;">用以<span class="lk">古希腊戏剧</span>，它被认为是起源于酒神祭祀。</div>
<div class="mn" style="top:366px">67</div>
<div class="mn" style="top:386px">68</div>
<div class="ml j" style="left:161px;top:386px;font-size:14px;">戏剧是由演员将某个故事或情境，以对话、歌唱或动作等方式所表演出来的艺术。戏剧有</div>
<div class="mn" style="top:408px">69</div>
<div class="ml j" style="left:161px;top:408px;font-size:14px;">四个元素，包括了“<span class="lk">演员</span>”、“<span class="lk">故事</span>（情境）”、“<span class="lk">舞台</span>（表演场地）”和“<span class="lk">观众</span>”。“演员”是</div>
<div class="mn" style="top:435px">70</div>
<div class="ml j" style="left:161px;top:435px;font-size:14px;">四者当中最重要的元素，他是角色的代言人，必须具备扮演的能力。演员在戏剧艺术中最</div>
<div class="mn" style="top:456px">71</div>
<div class="ml j" style="left:161px;top:456px;font-size:14px;">重大的作用就在于表演人物形象，通过<span class="lk">角色</span>的扮演，<span class="lk">观众</span>中的角色才能显示出来。如果脱</div>
<div class="mn" style="top:480px">72</div>
<div class="ml" style="left:161px;top:480px;font-size:14px;">离了演员的扮演，剧本中的角色就不再能称为戏剧。<span class="rt">↵</span></div>
<div class="mn" style="top:895px">73</div>
<div class="mn" style="top:922px">74</div>
<div class="ml" style="left:161px;top:922px;font-size:14px;"><span class="rt">↵</span></div>
<div class="mn" style="top:943px">75</div>
<div class="ml" style="left:161px;top:944px;font-size:14px;"><span class="rt">↵</span></div>
<div class="mn" style="top:965px">76</div>
<div class="ml" style="left:161px;top:966px;font-size:14px;"><span class="rt">↵</span></div>
<div class="mn" style="top:986px">77</div>
<div class="ml" style="left:161px;top:987px;font-size:14px;">小说<span class="rt">↵</span></div>
<div class="mn" style="top:1012px">78</div>
<div class="ml j" style="left:161px;top:1012px;font-size:14px;">小说是一种以刻画人物形象为中心，通过完整的故事情节和环境描写来反映社会生活的</div>
<div class="mn" style="top:1037px">79</div>
<div class="ml" style="left:161px;top:1037px;font-size:14px;">文学体裁。“小说”一词出自《<span class="lk">庄子</span>·外物》。<span class="rt">↵</span></div>
<div class="mn" style="top:1058px">80</div>
<div class="ml j" style="left:161px;top:1059px;font-size:14px;"><span class="lk">人物</span>、<span class="lk">情节</span>、<span class="lk">环境</span>是小说的三要素。情节一般包括开端、发展、高潮、结局四部分，有</div>
<div class="mn" style="top:1081px">81</div>
<div class="ml j" style="left:161px;top:1081px;font-size:14px;">的包括序幕、尾声。环境包括自然环境和社会环境。小说按照篇幅及容量可分为<span class="lk">长篇</span></div>
<div class="mn" style="top:1104px">82</div>
<div class="ml j" style="left:161px;top:1104px;font-size:14px;"><span class="lk">小说</span>、<span class="lk">中篇小说</span>、<span class="lk">短篇小说</span>和<span class="lk">微型小说</span>（小小说）。按照表现的内容可分为神话、<span class="lk">仙侠</span>、</div>
<div class="ml" style="left:440px;top:1140px;font-size:14px"><span class="rt">↵</span></div>
</div></div>
<svg class="a" style="left:697px;top:319px" width="58" height="36" viewBox="0 0 58 36">
 <defs>
  <linearGradient id="g1s" x1="0" y1="0" x2="0" y2="1"><stop offset="0" stop-color="#a9c3de"/><stop offset="1" stop-color="#e6edf4"/></linearGradient>
  <linearGradient id="g1w" x1="0" y1="0" x2="0" y2="1"><stop offset="0" stop-color="#9cbad6"/><stop offset="0.45" stop-color="#3f82c4"/><stop offset="1" stop-color="#0d4c98"/></linearGradient>
  <filter id="bl1"><feGaussianBlur stdDeviation="0.6"/></filter>
 </defs>
 <rect width="58" height="36" fill="url(#g1s)"/>
 <g filter="url(#bl1)">
 <path d="M-2 3 C4 3 10 6 16 9 C20 11 24 12 28 12 L28 16 L-2 16 Z" fill="#2f5f92"/>
 <path d="M22 10 L27 6 L31 8 L35 5 L40 8 L46 6 L52 9 L58 9 V16 H22 Z" fill="#c6d3e1"/>
 <path d="M-2 11 C10 10 22 13 40 12 C48 12 54 11 60 11 V17 H-2 Z" fill="#dfe7ef" opacity="0.85"/>
 <path d="M0 15 C8 14 16 15 26 16 V19 H0 Z" fill="#4a6a78"/>
 <path d="M24 19 C28 15 33 12 38 10 C44 8 50 7 58 7 V20 H24 Z" fill="#8a7a3a"/>
 <path d="M30 17 C33 13 36 11 40 11 C42 14 42 17 41 19 H30 Z" fill="#e0b43a"/>
 <path d="M40 12 C44 9 48 9 50 10 C52 14 52 17 50 19 H40 Z" fill="#c8962a"/>
 <path d="M50 8 C53 7 56 7 58 7 V19 H50 Z" fill="#d8a030"/>
 <path d="M12 17 C15 16 18 16 22 17 V19 H12 Z" fill="#c8905a"/>
 </g>
 <rect x="0" y="19.5" width="58" height="16.5" fill="url(#g1w)"/>
 <g filter="url(#bl1)">
 <path d="M0 19.5 H58 V22 H0 Z" fill="#8aa6b8"/>
 <path d="M30 20 H58 V34 C52 32 46 29 42 27 C37 24 33 22 30 20 Z" fill="#7a6a40" opacity="0.6"/>
 <path d="M36 21 C40 23 44 25 50 26 L52 21 Z" fill="#c89a40" opacity="0.6"/>
 <path d="M6 35 C10 31 16 31 20 33 C24 30 30 31 33 34 V36 H6 Z" fill="#dbe8f4" opacity="0.85"/>
 </g>
</svg>
<svg class="a" style="left:763px;top:319px" width="64" height="36" viewBox="0 0 64 36">
 <defs><filter id="bl2"><feGaussianBlur stdDeviation="0.55"/></filter></defs>
 <rect width="64" height="36" fill="#2f6fd6"/>
 <g filter="url(#bl2)">
 <path d="M6 -1 H36 C36 4 32 7 26 7 C22 9 16 8 12 6 C8 4 6 2 6 -1 Z" fill="#e8eef4"/>
 <path d="M38 5 C42 3 46 4 48 7 C50 9 46 11 42 10 C38 10 36 7 38 5 Z" fill="#eaf0f6"/>
 <path d="M34 13 C38 10 44 12 48 15 C48 19 42 20 38 18 C35 17 33 15 34 13 Z" fill="#e2e9f0"/>
 <path d="M0 -1 H6 C12 2 18 5 24 8 C32 10 40 16 46 24 L50 30 H0 Z" fill="#55605a"/>
 <path d="M4 4 C12 6 18 9 24 12 L22 16 C16 14 10 12 4 10 Z" fill="#6a726a"/>
 <path d="M0 14 C10 17 22 20 32 23 C40 25 46 28 52 30 H0 Z" fill="#3c7838"/>
 <path d="M12 18 C20 20 28 22 36 25 L26 28 L10 24 Z" fill="#62a046"/>
 <path d="M38 18 L42 15 L46 18 L50 20 L52 28 L40 27 Z" fill="#b8b4bc"/>
 <path d="M49 36 L47 18 C49 10 55 4 64 0 V36 Z" fill="#31552c"/>
 <path d="M53 32 C55 22 58 14 64 9 V36 H53 Z" fill="#4c7a3a"/>
 <path d="M0 29 H50 L52 36 H0 Z" fill="#4bb3a4"/>
 <path d="M0 32 H50 V36 H0 Z" fill="#5bbfb0"/>
 </g>
</svg>
<svg class="a" style="left:897px;top:247px" width="71" height="35" viewBox="0 0 71 35">
<defs><linearGradient id="g3s" x1="0" y1="0" x2="1" y2="0.4"><stop offset="0" stop-color="#2c5c98"/><stop offset="1" stop-color="#0e2866"/></linearGradient></defs>
<rect width="71" height="35" fill="url(#g3s)"/>
<polygon points="0,35 0,6.0 4,6.1 8,6.2 12,6.5 16,6.8 20,7.3 24,7.8 28,8.5 32,9.3 36,10.1 40,11.1 44,12.1 48,13.1 52,14.1 56,15.1 60,16.1 64,17.1 68,18.1 71,18.9 71,35" fill="#4a6a28"/>
<ellipse cx="38.0" cy="12.8" rx="2.3" ry="0.8" fill="#9aa838"/>
<ellipse cx="6.1" cy="14.6" rx="0.9" ry="1.0" fill="#b8b040"/>
<ellipse cx="15.8" cy="22.0" rx="1.7" ry="1.0" fill="#6aa040"/>
<ellipse cx="21.9" cy="28.6" rx="1.0" ry="1.2" fill="#a85a1a"/>
<ellipse cx="50.6" cy="19.8" rx="1.1" ry="1.3" fill="#88a040"/>
<ellipse cx="30.4" cy="11.0" rx="2.3" ry="1.0" fill="#88a040"/>
<ellipse cx="21.3" cy="17.3" rx="2.0" ry="0.9" fill="#a86a20"/>
<ellipse cx="29.7" cy="26.5" rx="2.3" ry="1.0" fill="#a85a1a"/>
<ellipse cx="39.6" cy="27.6" rx="1.3" ry="1.0" fill="#6a7a28"/>
<ellipse cx="35.3" cy="27.9" rx="2.1" ry="1.5" fill="#e8c040"/>
<ellipse cx="33.7" cy="23.2" rx="2.0" ry="0.9" fill="#6aa040"/>
<ellipse cx="41.0" cy="23.8" rx="1.3" ry="1.0" fill="#5a8a30"/>
<ellipse cx="17.6" cy="13.7" rx="1.6" ry="0.8" fill="#5a7a28"/>
<ellipse cx="28.5" cy="9.7" rx="2.1" ry="1.5" fill="#b8b040"/>
<ellipse cx="19.8" cy="14.5" rx="1.9" ry="1.0" fill="#6a8a30"/>
<ellipse cx="10.7" cy="23.0" rx="1.6" ry="1.2" fill="#6aa040"/>
<ellipse cx="29.7" cy="12.9" rx="1.3" ry="0.7" fill="#88a040"/>
<ellipse cx="61.0" cy="33.3" rx="1.5" ry="1.5" fill="#d8a830"/>
<ellipse cx="67.6" cy="23.8" rx="1.4" ry="1.0" fill="#e0c048"/>
<ellipse cx="34.2" cy="14.0" rx="0.9" ry="0.8" fill="#b8b040"/>
<ellipse cx="11.5" cy="11.9" rx="1.0" ry="1.2" fill="#9aa838"/>
<ellipse cx="38.1" cy="33.2" rx="0.9" ry="0.8" fill="#d8a830"/>
<ellipse cx="26.7" cy="22.2" rx="1.8" ry="1.1" fill="#a86a20"/>
<ellipse cx="8.2" cy="17.1" rx="1.6" ry="0.9" fill="#5a8a30"/>
<ellipse cx="10.2" cy="26.2" rx="1.6" ry="1.3" fill="#2a2a14"/>
<ellipse cx="49.0" cy="32.0" rx="1.3" ry="1.2" fill="#b8b038"/>
<ellipse cx="6.5" cy="29.6" rx="1.4" ry="0.8" fill="#b8b038"/>
<ellipse cx="54.8" cy="18.6" rx="1.6" ry="1.2" fill="#5a7a28"/>
<ellipse cx="43.5" cy="27.6" rx="2.1" ry="1.4" fill="#c83a18"/>
<ellipse cx="36.8" cy="12.4" rx="2.4" ry="1.4" fill="#9aa838"/>
<ellipse cx="57.4" cy="25.3" rx="2.3" ry="1.0" fill="#a86a20"/>
<ellipse cx="15.7" cy="7.9" rx="1.3" ry="1.1" fill="#b8b040"/>
<ellipse cx="70.0" cy="21.4" rx="1.6" ry="1.3" fill="#9aa838"/>
<ellipse cx="46.9" cy="31.8" rx="1.6" ry="0.8" fill="#c83a18"/>
<ellipse cx="56.9" cy="34.0" rx="1.5" ry="1.3" fill="#e0902a"/>
<ellipse cx="41.9" cy="16.3" rx="1.0" ry="1.4" fill="#d0c050"/>
<ellipse cx="69.6" cy="23.0" rx="1.0" ry="1.1" fill="#6a8a30"/>
<ellipse cx="1.5" cy="28.0" rx="1.6" ry="1.5" fill="#e8c040"/>
<ellipse cx="30.8" cy="30.5" rx="0.8" ry="0.8" fill="#c83a18"/>
<ellipse cx="35.6" cy="26.7" rx="1.2" ry="1.0" fill="#6a7a28"/>
<ellipse cx="9.3" cy="31.9" rx="2.2" ry="1.3" fill="#6a7a28"/>
<ellipse cx="57.9" cy="18.1" rx="2.3" ry="1.1" fill="#5a7a28"/>
<ellipse cx="37.8" cy="18.3" rx="2.2" ry="1.4" fill="#6aa040"/>
<ellipse cx="43.2" cy="27.2" rx="1.1" ry="1.1" fill="#a85a1a"/>
<ellipse cx="51.5" cy="19.5" rx="1.9" ry="1.1" fill="#6a8a30"/>
<ellipse cx="34.3" cy="27.2" rx="0.9" ry="0.8" fill="#b8b038"/>
<ellipse cx="23.1" cy="34.1" rx="1.1" ry="0.9" fill="#b8b038"/>
<ellipse cx="36.1" cy="28.3" rx="2.3" ry="1.3" fill="#b8b038"/>
<ellipse cx="62.2" cy="33.0" rx="2.3" ry="1.5" fill="#2a2a14"/>
<ellipse cx="14.4" cy="15.7" rx="1.0" ry="1.0" fill="#e0c048"/>
<ellipse cx="5.2" cy="8.4" rx="1.1" ry="0.9" fill="#9aa838"/>
<ellipse cx="8.7" cy="27.2" rx="1.0" ry="1.5" fill="#6a7a28"/>
<ellipse cx="34.6" cy="34.6" rx="1.1" ry="1.0" fill="#c83a18"/>
<ellipse cx="36.6" cy="11.9" rx="1.4" ry="0.7" fill="#b8b040"/>
<ellipse cx="26.0" cy="11.8" rx="1.5" ry="0.6" fill="#c8a838"/>
<ellipse cx="23.5" cy="21.8" rx="1.0" ry="1.5" fill="#88b048"/>
<ellipse cx="16.2" cy="30.7" rx="1.2" ry="0.6" fill="#e8c040"/>
<ellipse cx="9.2" cy="14.8" rx="2.1" ry="0.9" fill="#d0c050"/>
<ellipse cx="10.6" cy="32.2" rx="1.9" ry="0.7" fill="#3a3a18"/>
<ellipse cx="4.1" cy="24.1" rx="2.2" ry="0.9" fill="#e0c048"/>
<ellipse cx="18.5" cy="21.3" rx="0.9" ry="1.5" fill="#d8b040"/>
<ellipse cx="32.2" cy="11.9" rx="1.5" ry="1.5" fill="#88a040"/>
<ellipse cx="50.4" cy="32.8" rx="1.2" ry="0.8" fill="#a85a1a"/>
<ellipse cx="66.2" cy="22.0" rx="2.0" ry="0.9" fill="#88a040"/>
<ellipse cx="52.0" cy="19.3" rx="1.6" ry="0.8" fill="#b8b040"/>
<ellipse cx="31.7" cy="23.0" rx="1.9" ry="1.1" fill="#e0c048"/>
<ellipse cx="63.1" cy="34.0" rx="1.9" ry="1.6" fill="#2a2a14"/>
<ellipse cx="24.3" cy="29.1" rx="1.4" ry="0.9" fill="#a85a1a"/>
<ellipse cx="5.0" cy="25.9" rx="1.5" ry="0.7" fill="#2a2a14"/>
<ellipse cx="35.9" cy="34.0" rx="1.9" ry="0.6" fill="#c83a18"/>
<ellipse cx="13.2" cy="9.4" rx="1.2" ry="1.6" fill="#9aa838"/>
<ellipse cx="69.1" cy="19.1" rx="0.9" ry="1.5" fill="#b8b040"/>
<ellipse cx="19.8" cy="23.0" rx="1.6" ry="0.6" fill="#d8b040"/>
<ellipse cx="1.6" cy="10.6" rx="0.9" ry="1.6" fill="#b8b040"/>
<ellipse cx="63.4" cy="27.4" rx="2.0" ry="1.3" fill="#e0c048"/>
<ellipse cx="58.6" cy="25.0" rx="2.0" ry="1.4" fill="#e0c048"/>
<ellipse cx="9.9" cy="18.3" rx="2.1" ry="1.2" fill="#6aa040"/>
<ellipse cx="63.4" cy="23.9" rx="0.9" ry="0.6" fill="#d8b040"/>
<ellipse cx="45.2" cy="33.6" rx="2.1" ry="1.2" fill="#e0902a"/>
<ellipse cx="44.6" cy="21.9" rx="1.6" ry="0.6" fill="#d8b040"/>
<ellipse cx="56.6" cy="26.2" rx="1.9" ry="0.7" fill="#88b048"/>
<ellipse cx="5.3" cy="9.3" rx="2.0" ry="0.8" fill="#d0c050"/>
<ellipse cx="46.1" cy="16.1" rx="1.4" ry="1.1" fill="#5a7a28"/>
<ellipse cx="48.5" cy="26.8" rx="0.9" ry="0.7" fill="#d8b040"/>
<ellipse cx="18.0" cy="26.0" rx="1.8" ry="0.7" fill="#2a2a14"/>
<ellipse cx="34.3" cy="17.0" rx="1.0" ry="0.8" fill="#d0c050"/>
<ellipse cx="34.8" cy="24.8" rx="1.5" ry="1.1" fill="#3a5a20"/>
<ellipse cx="8.4" cy="31.3" rx="1.3" ry="0.7" fill="#c83a18"/>
<ellipse cx="33.6" cy="10.1" rx="2.1" ry="1.6" fill="#9aa838"/>
<ellipse cx="14.9" cy="33.1" rx="0.9" ry="0.7" fill="#c83a18"/>
<ellipse cx="25.5" cy="21.1" rx="2.2" ry="1.3" fill="#3a5a20"/>
<ellipse cx="16.4" cy="31.4" rx="1.4" ry="0.8" fill="#3a3a18"/>
<ellipse cx="67.4" cy="23.9" rx="1.3" ry="0.7" fill="#e0c048"/>
<ellipse cx="24.4" cy="11.1" rx="1.3" ry="0.9" fill="#5a7a28"/>
<ellipse cx="24.0" cy="13.9" rx="1.9" ry="1.5" fill="#b8b040"/>
<ellipse cx="20.6" cy="13.0" rx="1.4" ry="1.5" fill="#c8a838"/>
<ellipse cx="5.4" cy="32.4" rx="2.2" ry="0.9" fill="#2a2a14"/>
<ellipse cx="3.7" cy="23.2" rx="1.2" ry="0.9" fill="#c89a30"/>
<ellipse cx="26.5" cy="33.5" rx="2.1" ry="1.2" fill="#d8a830"/>
<ellipse cx="64.9" cy="32.9" rx="1.1" ry="0.7" fill="#b8b038"/>
<ellipse cx="64.7" cy="19.3" rx="1.6" ry="0.9" fill="#b8b040"/>
<ellipse cx="21.1" cy="25.9" rx="1.4" ry="0.8" fill="#2a2a14"/>
<ellipse cx="34.3" cy="23.4" rx="1.1" ry="0.8" fill="#88b048"/>
<ellipse cx="14.8" cy="31.7" rx="1.7" ry="1.1" fill="#3a3a18"/>
<ellipse cx="23.6" cy="26.6" rx="1.0" ry="0.8" fill="#e0902a"/>
<ellipse cx="6.4" cy="12.0" rx="1.3" ry="1.0" fill="#9aa838"/>
<ellipse cx="1.4" cy="30.5" rx="1.5" ry="1.1" fill="#e0902a"/>
<ellipse cx="26.8" cy="11.8" rx="1.6" ry="1.2" fill="#9aa838"/>
<ellipse cx="25.6" cy="24.0" rx="0.9" ry="1.5" fill="#d8b040"/>
<ellipse cx="27.3" cy="22.6" rx="2.3" ry="1.4" fill="#e0c048"/>
<ellipse cx="2.3" cy="24.8" rx="2.3" ry="1.1" fill="#5a8a30"/>
<ellipse cx="5.2" cy="32.6" rx="2.2" ry="1.6" fill="#b8b038"/>
<ellipse cx="11.0" cy="18.3" rx="2.3" ry="1.3" fill="#88b048"/>
<ellipse cx="46.0" cy="26.8" rx="0.9" ry="1.4" fill="#5a8a30"/>
<ellipse cx="50.8" cy="33.7" rx="1.6" ry="1.0" fill="#2a2a14"/>
<ellipse cx="21.3" cy="33.0" rx="1.4" ry="0.8" fill="#c83a18"/>
<ellipse cx="21.4" cy="16.1" rx="1.8" ry="1.5" fill="#a86a20"/>
<ellipse cx="17.5" cy="33.6" rx="0.9" ry="0.8" fill="#2a2a14"/>
<ellipse cx="62.8" cy="22.7" rx="1.2" ry="1.3" fill="#88b048"/>
<ellipse cx="2.4" cy="11.8" rx="1.4" ry="1.0" fill="#c8a838"/>
<ellipse cx="0.5" cy="10.2" rx="1.6" ry="0.8" fill="#5a7a28"/>
<ellipse cx="15.7" cy="26.6" rx="1.0" ry="1.2" fill="#2a2a14"/>
<ellipse cx="43.3" cy="31.4" rx="1.5" ry="1.3" fill="#3a3a18"/>
<ellipse cx="27.9" cy="31.4" rx="2.0" ry="1.6" fill="#6a7a28"/>
<ellipse cx="13.2" cy="32.8" rx="0.9" ry="1.3" fill="#3a3a18"/>
<ellipse cx="26.9" cy="13.1" rx="1.5" ry="0.7" fill="#6a8a30"/>
<ellipse cx="29.8" cy="31.0" rx="2.3" ry="0.8" fill="#b8b038"/>
<ellipse cx="25.3" cy="28.8" rx="0.9" ry="1.3" fill="#e0902a"/>
<ellipse cx="13.9" cy="19.0" rx="1.1" ry="1.0" fill="#5a8a30"/>
<ellipse cx="29.2" cy="28.4" rx="0.9" ry="0.6" fill="#e0902a"/>
<ellipse cx="4.4" cy="32.2" rx="1.1" ry="0.7" fill="#2a2a14"/>
<ellipse cx="43.0" cy="12.7" rx="2.3" ry="1.2" fill="#6a8a30"/>
<ellipse cx="18.6" cy="25.1" rx="2.3" ry="0.9" fill="#a86a20"/>
<ellipse cx="51.2" cy="20.8" rx="0.8" ry="0.8" fill="#88b048"/>
<ellipse cx="33.7" cy="33.5" rx="2.1" ry="1.5" fill="#e0902a"/>
<ellipse cx="16.8" cy="30.1" rx="1.4" ry="1.4" fill="#3a3a18"/>
<ellipse cx="5.6" cy="6.9" rx="1.1" ry="1.0" fill="#5a7a28"/>
<ellipse cx="46.1" cy="16.9" rx="1.3" ry="1.6" fill="#88a040"/>
<ellipse cx="62.7" cy="34.6" rx="1.8" ry="0.8" fill="#2a2a14"/>
<ellipse cx="29.9" cy="34.6" rx="1.1" ry="0.7" fill="#3a3a18"/>
<ellipse cx="32.7" cy="31.2" rx="2.0" ry="1.4" fill="#c83a18"/>
<ellipse cx="40.2" cy="13.1" rx="1.2" ry="1.0" fill="#d0c050"/>
<ellipse cx="13.2" cy="8.2" rx="2.2" ry="1.2" fill="#6a8a30"/>
<ellipse cx="23.2" cy="13.9" rx="1.6" ry="0.8" fill="#b8b040"/>
<ellipse cx="57.4" cy="22.9" rx="1.0" ry="1.1" fill="#6aa040"/>
<ellipse cx="58.2" cy="29.4" rx="0.9" ry="0.9" fill="#6a7a28"/>
<ellipse cx="69.1" cy="20.4" rx="1.4" ry="1.5" fill="#9aa838"/>
<ellipse cx="55.2" cy="33.1" rx="1.8" ry="1.3" fill="#e8c040"/>
<ellipse cx="52.0" cy="32.0" rx="2.1" ry="1.0" fill="#d8a830"/>
<ellipse cx="26.4" cy="21.7" rx="1.1" ry="1.4" fill="#88b048"/>
<ellipse cx="7.2" cy="13.8" rx="1.0" ry="1.1" fill="#88a040"/>
<ellipse cx="46.4" cy="13.9" rx="1.5" ry="0.9" fill="#6a8a30"/>
<ellipse cx="21.8" cy="33.4" rx="2.0" ry="1.5" fill="#2a2a14"/>
<ellipse cx="54.4" cy="28.1" rx="1.4" ry="1.0" fill="#c83a18"/>
<ellipse cx="6.4" cy="20.2" rx="1.5" ry="0.8" fill="#a86a20"/>
<ellipse cx="1.1" cy="19.3" rx="0.9" ry="1.2" fill="#e0c048"/>
<ellipse cx="26.3" cy="17.7" rx="1.4" ry="0.8" fill="#c89a30"/>
<ellipse cx="27.2" cy="26.4" rx="1.3" ry="1.4" fill="#c83a18"/>
<ellipse cx="3.1" cy="31.9" rx="0.9" ry="1.5" fill="#6a7a28"/>
<ellipse cx="27.5" cy="31.6" rx="1.8" ry="1.5" fill="#a85a1a"/>
<ellipse cx="44.1" cy="21.5" rx="2.1" ry="0.8" fill="#d8b040"/>
<ellipse cx="15.5" cy="14.0" rx="1.1" ry="1.0" fill="#88a040"/>
<ellipse cx="10.6" cy="34.0" rx="0.9" ry="1.2" fill="#c83a18"/>
<ellipse cx="42.6" cy="19.3" rx="1.8" ry="0.9" fill="#3a5a20"/>
<ellipse cx="17.7" cy="13.6" rx="1.5" ry="1.0" fill="#6a8a30"/>
<ellipse cx="1.7" cy="21.7" rx="1.5" ry="1.0" fill="#5a8a30"/>
<ellipse cx="43.9" cy="28.7" rx="2.1" ry="1.0" fill="#a85a1a"/>
<ellipse cx="4.8" cy="12.6" rx="0.9" ry="1.0" fill="#6a8a30"/>
<ellipse cx="52.1" cy="27.2" rx="0.9" ry="1.1" fill="#88b048"/>
<ellipse cx="26.8" cy="33.3" rx="0.8" ry="0.7" fill="#a85a1a"/>
<ellipse cx="43.6" cy="24.2" rx="1.1" ry="1.6" fill="#88b048"/>
<ellipse cx="34.9" cy="33.5" rx="1.9" ry="1.3" fill="#a85a1a"/>
<ellipse cx="15.7" cy="29.2" rx="1.1" ry="1.5" fill="#2a2a14"/>
<ellipse cx="19.5" cy="28.5" rx="1.2" ry="1.6" fill="#a85a1a"/>
<ellipse cx="34.1" cy="20.7" rx="1.3" ry="0.6" fill="#d8b040"/>
<ellipse cx="66.5" cy="23.8" rx="1.1" ry="1.4" fill="#e0c048"/>
<ellipse cx="8.2" cy="18.6" rx="2.3" ry="1.1" fill="#a86a20"/>
<ellipse cx="37.0" cy="24.1" rx="1.2" ry="1.1" fill="#88b048"/>
<ellipse cx="60.8" cy="25.8" rx="1.2" ry="1.6" fill="#a86a20"/>
<ellipse cx="41.0" cy="12.6" rx="0.9" ry="0.8" fill="#5a7a28"/>
<ellipse cx="43.7" cy="33.5" rx="2.1" ry="0.9" fill="#2a2a14"/>
<ellipse cx="45.4" cy="34.4" rx="2.0" ry="1.3" fill="#6a7a28"/>
<ellipse cx="15.7" cy="10.2" rx="1.5" ry="1.1" fill="#d0c050"/>
<ellipse cx="16.1" cy="22.9" rx="0.9" ry="1.2" fill="#6aa040"/>
<ellipse cx="21.6" cy="18.3" rx="1.5" ry="0.9" fill="#d8b040"/>
<ellipse cx="9.5" cy="12.8" rx="1.6" ry="0.7" fill="#5a7a28"/>
<ellipse cx="45.3" cy="30.5" rx="1.4" ry="0.9" fill="#2a2a14"/>
<ellipse cx="0.8" cy="22.6" rx="1.8" ry="1.2" fill="#a86a20"/>
<ellipse cx="42.7" cy="18.1" rx="1.2" ry="1.5" fill="#c8a838"/>
<ellipse cx="3.1" cy="18.6" rx="1.1" ry="0.8" fill="#e0c048"/>
<ellipse cx="43.5" cy="23.0" rx="1.0" ry="0.8" fill="#d8b040"/>
<ellipse cx="43.2" cy="17.7" rx="1.5" ry="1.2" fill="#d0c050"/>
<ellipse cx="44.4" cy="34.8" rx="1.9" ry="0.6" fill="#3a3a18"/>
<ellipse cx="60.0" cy="26.1" rx="0.9" ry="1.3" fill="#5a8a30"/>
<ellipse cx="12.5" cy="34.9" rx="1.2" ry="0.6" fill="#2a2a14"/>
<ellipse cx="23.8" cy="26.2" rx="1.9" ry="0.9" fill="#2a2a14"/>
<ellipse cx="39.3" cy="15.3" rx="2.3" ry="1.6" fill="#5a7a28"/>
<ellipse cx="21.0" cy="32.5" rx="0.9" ry="1.1" fill="#c83a18"/>
<ellipse cx="12.1" cy="31.7" rx="2.3" ry="1.3" fill="#c83a18"/>
<ellipse cx="23.2" cy="30.8" rx="1.8" ry="1.0" fill="#6a7a28"/>
<ellipse cx="60.5" cy="32.3" rx="1.6" ry="1.4" fill="#b8b038"/>
<ellipse cx="49.5" cy="30.0" rx="2.3" ry="0.8" fill="#e0902a"/>
<ellipse cx="62.8" cy="27.6" rx="1.8" ry="0.7" fill="#e0c048"/>
<ellipse cx="3.0" cy="24.2" rx="1.9" ry="1.3" fill="#6aa040"/>
<ellipse cx="4.7" cy="20.7" rx="1.1" ry="1.6" fill="#a86a20"/>
<ellipse cx="37.9" cy="23.2" rx="1.0" ry="0.8" fill="#e0c048"/>
<ellipse cx="60.2" cy="28.4" rx="2.1" ry="1.2" fill="#e8c040"/>
<ellipse cx="6.9" cy="26.5" rx="1.3" ry="0.9" fill="#c83a18"/>
<ellipse cx="18.5" cy="12.3" rx="0.9" ry="1.4" fill="#6a8a30"/>
<ellipse cx="64.6" cy="26.9" rx="2.2" ry="1.2" fill="#5a8a30"/>
<ellipse cx="2.2" cy="14.5" rx="1.6" ry="0.7" fill="#c8a838"/>
<ellipse cx="40.2" cy="25.0" rx="1.7" ry="0.9" fill="#88b048"/>
<ellipse cx="31.0" cy="18.3" rx="2.0" ry="1.6" fill="#3a5a20"/>
<ellipse cx="0.3" cy="17.2" rx="1.9" ry="1.4" fill="#5a8a30"/>
<ellipse cx="68.7" cy="20.7" rx="1.6" ry="1.2" fill="#5a7a28"/>
<ellipse cx="11.3" cy="28.5" rx="1.6" ry="0.7" fill="#c83a18"/>
<ellipse cx="55.9" cy="24.4" rx="1.8" ry="1.0" fill="#88b048"/>
<ellipse cx="28.5" cy="13.8" rx="0.9" ry="1.5" fill="#d0c050"/>
<ellipse cx="1.8" cy="7.2" rx="1.5" ry="1.1" fill="#6a8a30"/>
<ellipse cx="12.1" cy="34.4" rx="2.3" ry="0.7" fill="#c83a18"/>
<ellipse cx="42.2" cy="24.1" rx="1.4" ry="0.9" fill="#6aa040"/>
<ellipse cx="11.0" cy="29.5" rx="2.0" ry="0.8" fill="#b8b038"/>
<ellipse cx="31.2" cy="27.1" rx="1.0" ry="1.1" fill="#c83a18"/>
<ellipse cx="13.6" cy="10.6" rx="2.1" ry="1.2" fill="#d0c050"/>
<ellipse cx="51.4" cy="34.1" rx="1.8" ry="0.9" fill="#6a7a28"/>
<ellipse cx="16.8" cy="33.5" rx="2.4" ry="1.3" fill="#2a2a14"/>
<ellipse cx="7.2" cy="33.7" rx="1.1" ry="0.8" fill="#e8c040"/>
<ellipse cx="10.5" cy="10.6" rx="1.5" ry="0.8" fill="#6a8a30"/>
<ellipse cx="14.7" cy="13.6" rx="0.8" ry="1.5" fill="#9aa838"/>
<ellipse cx="1.6" cy="9.0" rx="1.4" ry="1.3" fill="#d0c050"/>
<ellipse cx="40.8" cy="26.2" rx="2.2" ry="1.3" fill="#e0c048"/>
<ellipse cx="46.3" cy="30.7" rx="1.9" ry="1.2" fill="#c83a18"/>
<ellipse cx="32.2" cy="11.0" rx="1.9" ry="1.5" fill="#d0c050"/>
<ellipse cx="17.2" cy="14.0" rx="1.8" ry="0.9" fill="#d0c050"/>
<ellipse cx="30.1" cy="15.9" rx="2.2" ry="1.1" fill="#88a040"/>
<ellipse cx="46.9" cy="30.6" rx="2.0" ry="1.0" fill="#6a7a28"/>
<ellipse cx="34.8" cy="34.1" rx="1.2" ry="0.8" fill="#d8a830"/>
<ellipse cx="50.9" cy="33.3" rx="1.6" ry="0.7" fill="#c83a18"/>
<ellipse cx="40.8" cy="18.9" rx="1.6" ry="1.2" fill="#5a8a30"/>
<ellipse cx="58.9" cy="18.3" rx="2.0" ry="1.1" fill="#c8a838"/>
<ellipse cx="36.5" cy="32.6" rx="1.8" ry="0.9" fill="#6a7a28"/>
<ellipse cx="5.3" cy="32.0" rx="1.7" ry="0.7" fill="#6a7a28"/>
<ellipse cx="21.5" cy="14.0" rx="2.4" ry="1.6" fill="#88a040"/>
<ellipse cx="11.7" cy="32.5" rx="2.1" ry="1.2" fill="#e8c040"/>
<ellipse cx="33.3" cy="19.7" rx="2.1" ry="0.7" fill="#d8b040"/>
<ellipse cx="47.3" cy="29.1" rx="1.5" ry="0.9" fill="#e0902a"/>
<ellipse cx="26.7" cy="8.9" rx="1.9" ry="1.1" fill="#c8a838"/>
<ellipse cx="57.2" cy="28.0" rx="1.2" ry="0.9" fill="#a86a20"/>
<ellipse cx="34.0" cy="15.0" rx="0.9" ry="1.5" fill="#d0c050"/>
<ellipse cx="10.8" cy="10.6" rx="0.9" ry="1.4" fill="#c8a838"/>
<ellipse cx="64.3" cy="27.4" rx="1.6" ry="0.9" fill="#c89a30"/>
<ellipse cx="41.4" cy="23.0" rx="2.3" ry="1.3" fill="#d8b040"/>
<ellipse cx="10.1" cy="8.2" rx="1.5" ry="1.4" fill="#5a7a28"/>
<ellipse cx="14.8" cy="14.1" rx="1.1" ry="1.5" fill="#88a040"/>
<ellipse cx="43.2" cy="27.3" rx="2.1" ry="1.4" fill="#b8b038"/>
<ellipse cx="14.0" cy="24.2" rx="2.0" ry="1.0" fill="#88b048"/>
<ellipse cx="62.7" cy="19.4" rx="1.5" ry="1.4" fill="#6a8a30"/>
<ellipse cx="33.6" cy="19.5" rx="1.5" ry="0.7" fill="#5a8a30"/>
<ellipse cx="34.9" cy="17.4" rx="1.1" ry="0.9" fill="#6aa040"/>
<ellipse cx="49.4" cy="17.4" rx="2.1" ry="1.0" fill="#6a8a30"/>
<ellipse cx="29.7" cy="33.6" rx="1.1" ry="1.0" fill="#e8c040"/>
<ellipse cx="3.3" cy="25.8" rx="2.1" ry="0.7" fill="#6a7a28"/>
<ellipse cx="34.4" cy="26.5" rx="0.9" ry="1.3" fill="#a85a1a"/>
<ellipse cx="33.7" cy="18.4" rx="1.3" ry="0.9" fill="#d8b040"/>
<ellipse cx="20.5" cy="12.4" rx="1.4" ry="1.1" fill="#c8a838"/>
<ellipse cx="19.3" cy="17.7" rx="1.8" ry="1.4" fill="#d8b040"/>
<ellipse cx="23.5" cy="11.1" rx="1.0" ry="1.6" fill="#6a8a30"/>
<ellipse cx="6.2" cy="34.9" rx="2.0" ry="1.5" fill="#e0902a"/>
<ellipse cx="13.5" cy="32.3" rx="2.1" ry="1.5" fill="#d8a830"/>
<ellipse cx="43.4" cy="21.6" rx="1.1" ry="1.3" fill="#88b048"/>
<ellipse cx="32.5" cy="26.7" rx="1.9" ry="1.5" fill="#e8c040"/>
<ellipse cx="22.0" cy="24.9" rx="1.1" ry="0.6" fill="#3a5a20"/>
<ellipse cx="1.4" cy="19.8" rx="1.6" ry="1.1" fill="#6aa040"/>
<ellipse cx="58.6" cy="27.1" rx="1.7" ry="1.5" fill="#e0c048"/>
<ellipse cx="27.5" cy="20.7" rx="1.6" ry="1.0" fill="#c89a30"/>
<ellipse cx="7.2" cy="22.6" rx="2.2" ry="1.2" fill="#d8b040"/>
<ellipse cx="47.5" cy="34.5" rx="1.1" ry="0.7" fill="#e8c040"/>
<ellipse cx="40.4" cy="15.8" rx="1.1" ry="0.7" fill="#d0c050"/>
<ellipse cx="55.0" cy="25.0" rx="2.0" ry="0.7" fill="#c89a30"/>
<ellipse cx="44.6" cy="24.8" rx="1.9" ry="1.5" fill="#5a8a30"/>
<ellipse cx="62.7" cy="24.0" rx="1.4" ry="0.9" fill="#88b048"/>
<ellipse cx="42.6" cy="33.5" rx="1.8" ry="0.9" fill="#3a3a18"/>
<ellipse cx="67.4" cy="25.5" rx="1.9" ry="0.7" fill="#5a8a30"/>
<ellipse cx="45.8" cy="22.0" rx="1.6" ry="1.4" fill="#e0c048"/>
<ellipse cx="19.9" cy="21.8" rx="2.2" ry="1.3" fill="#a86a20"/>
<ellipse cx="59.1" cy="20.5" rx="1.4" ry="1.3" fill="#b8b040"/>
<ellipse cx="42.7" cy="31.4" rx="1.3" ry="0.6" fill="#3a3a18"/>
<ellipse cx="18.7" cy="14.8" rx="2.3" ry="1.4" fill="#88a040"/>
<ellipse cx="10.0" cy="31.2" rx="1.2" ry="1.5" fill="#a85a1a"/>
<ellipse cx="57.3" cy="24.0" rx="1.4" ry="0.7" fill="#5a8a30"/>
<ellipse cx="39.3" cy="27.9" rx="2.1" ry="1.3" fill="#c83a18"/>
<ellipse cx="4.1" cy="13.8" rx="1.1" ry="0.9" fill="#d0c050"/>
<ellipse cx="53.3" cy="27.7" rx="1.7" ry="1.1" fill="#5a8a30"/>
<ellipse cx="28.3" cy="18.2" rx="2.2" ry="1.1" fill="#3a5a20"/>
<ellipse cx="33.8" cy="20.6" rx="1.1" ry="0.7" fill="#d8b040"/>
<ellipse cx="41.0" cy="12.6" rx="1.6" ry="0.7" fill="#5a7a28"/>
<ellipse cx="3.2" cy="34.9" rx="2.2" ry="1.0" fill="#6a7a28"/>
<ellipse cx="19.9" cy="21.2" rx="0.9" ry="1.6" fill="#88b048"/>
<ellipse cx="61.5" cy="17.0" rx="1.1" ry="1.5" fill="#88a040"/>
<ellipse cx="31.7" cy="20.8" rx="1.2" ry="0.6" fill="#c89a30"/>
<ellipse cx="39.6" cy="30.5" rx="1.6" ry="1.4" fill="#3a3a18"/>
<ellipse cx="63.5" cy="30.2" rx="2.3" ry="1.3" fill="#e0902a"/>
<ellipse cx="6.4" cy="11.2" rx="1.8" ry="1.6" fill="#b8b040"/>
<ellipse cx="47.6" cy="13.8" rx="2.2" ry="1.0" fill="#c8a838"/>
<ellipse cx="16.7" cy="25.2" rx="0.9" ry="0.9" fill="#a85a1a"/>
<ellipse cx="25.0" cy="31.6" rx="2.1" ry="0.6" fill="#d8a830"/>
<ellipse cx="55.8" cy="24.8" rx="0.9" ry="0.7" fill="#5a8a30"/>
<ellipse cx="53.6" cy="32.9" rx="1.7" ry="1.0" fill="#2a2a14"/>
<ellipse cx="46.3" cy="16.5" rx="1.2" ry="0.7" fill="#6a8a30"/>
<ellipse cx="2.6" cy="32.5" rx="0.9" ry="1.2" fill="#c83a18"/>
<ellipse cx="26.5" cy="26.2" rx="2.3" ry="1.5" fill="#3a3a18"/>
<ellipse cx="5.3" cy="34.0" rx="2.1" ry="1.1" fill="#6a7a28"/>
<ellipse cx="50.7" cy="19.4" rx="1.5" ry="0.7" fill="#b8b040"/>
<ellipse cx="1.8" cy="20.0" rx="1.3" ry="0.8" fill="#3a5a20"/>
<ellipse cx="34.9" cy="11.1" rx="1.0" ry="1.6" fill="#c8a838"/>
<ellipse cx="4.0" cy="31.3" rx="1.7" ry="1.4" fill="#c83a18"/>
<ellipse cx="8.5" cy="26.4" rx="1.5" ry="0.9" fill="#6a7a28"/>
<ellipse cx="16.9" cy="8.3" rx="1.3" ry="1.5" fill="#c8a838"/>
<ellipse cx="4.1" cy="25.4" rx="1.0" ry="1.2" fill="#2a2a14"/>
<ellipse cx="31.4" cy="17.8" rx="1.5" ry="1.4" fill="#c89a30"/>
<ellipse cx="29.0" cy="9.7" rx="1.0" ry="0.8" fill="#b8b040"/>
<ellipse cx="54.7" cy="24.9" rx="1.8" ry="1.4" fill="#d8b040"/>
<ellipse cx="63.1" cy="25.6" rx="1.1" ry="0.7" fill="#3a5a20"/>
<ellipse cx="47.6" cy="22.0" rx="1.7" ry="0.8" fill="#d8b040"/>
<ellipse cx="4.7" cy="25.6" rx="2.1" ry="1.5" fill="#e0902a"/>
<ellipse cx="36.8" cy="12.2" rx="2.1" ry="1.5" fill="#6a8a30"/>
<ellipse cx="13.2" cy="29.1" rx="0.9" ry="1.3" fill="#6a7a28"/>
<ellipse cx="40.8" cy="30.0" rx="1.6" ry="1.0" fill="#6a7a28"/>
<ellipse cx="50.7" cy="28.6" rx="2.0" ry="1.5" fill="#6a7a28"/>
<ellipse cx="40.9" cy="31.4" rx="2.2" ry="1.6" fill="#2a2a14"/>
<ellipse cx="35.1" cy="18.0" rx="0.8" ry="1.6" fill="#c89a30"/>
<ellipse cx="7.3" cy="8.8" rx="2.3" ry="0.6" fill="#5a7a28"/>
<ellipse cx="65.8" cy="25.9" rx="0.8" ry="1.2" fill="#3a5a20"/>
<ellipse cx="40.9" cy="18.3" rx="1.5" ry="1.0" fill="#d0c050"/>
<ellipse cx="19.4" cy="16.3" rx="1.0" ry="0.7" fill="#3a5a20"/>
<ellipse cx="62.8" cy="19.0" rx="2.2" ry="0.7" fill="#b8b040"/>
<ellipse cx="40.7" cy="26.1" rx="2.3" ry="0.6" fill="#c89a30"/>
<ellipse cx="45.1" cy="24.3" rx="1.4" ry="1.5" fill="#6aa040"/>
<ellipse cx="17.1" cy="11.7" rx="2.1" ry="1.2" fill="#c8a838"/>
<ellipse cx="28.4" cy="19.6" rx="1.6" ry="1.6" fill="#a86a20"/>
<ellipse cx="30.0" cy="22.1" rx="1.0" ry="0.8" fill="#a86a20"/>
<ellipse cx="29.9" cy="13.9" rx="1.8" ry="1.4" fill="#c8a838"/>
<ellipse cx="62.8" cy="31.0" rx="2.2" ry="1.2" fill="#d8a830"/>
<ellipse cx="65.2" cy="21.8" rx="1.7" ry="1.5" fill="#d0c050"/>
<ellipse cx="36.9" cy="15.2" rx="1.3" ry="0.9" fill="#9aa838"/>
<ellipse cx="42.2" cy="33.5" rx="2.2" ry="0.7" fill="#b8b038"/>
<ellipse cx="41.9" cy="32.6" rx="1.0" ry="0.7" fill="#3a3a18"/>
<ellipse cx="20.8" cy="14.2" rx="1.2" ry="1.3" fill="#6a8a30"/>
<ellipse cx="32.2" cy="24.3" rx="1.8" ry="0.8" fill="#d8b040"/>
<ellipse cx="50.4" cy="16.1" rx="1.3" ry="1.1" fill="#88a040"/>
<path d="M17 23 C22 22 28 25 32 35 H15 Z" fill="#262614" opacity="0.7"/>
<rect x="30.5" y="18" width="3" height="17" fill="#2a1510"/>
</svg>
<svg class="a" style="left:897px;top:311px" width="160" height="90" viewBox="0 0 160 90">
 <defs>
  <linearGradient id="gpl" x1="0" y1="0" x2="1" y2="0"><stop offset="0" stop-color="#e54585"/><stop offset="0.6" stop-color="#f6a9c8"/><stop offset="1" stop-color="#fbe0ea"/></linearGradient>
  <linearGradient id="gpr" x1="1" y1="0" x2="0" y2="0"><stop offset="0" stop-color="#e54585"/><stop offset="0.6" stop-color="#f6a9c8"/><stop offset="1" stop-color="#fbe0ea"/></linearGradient>
  <linearGradient id="gcup" x1="0" y1="0" x2="0" y2="1"><stop offset="0" stop-color="#f0609a"/><stop offset="1" stop-color="#f7b8d2"/></linearGradient>
  <linearGradient id="gl" x1="0" y1="0" x2="1" y2="1"><stop offset="0" stop-color="#a6cf5e"/><stop offset="1" stop-color="#c2dc74"/></linearGradient>
 </defs>
 <rect width="160" height="90" fill="#8aab86"/>
 <path d="M0 0 H52 C60 8 72 16 90 24 L60 32 C40 30 20 31 0 33 Z" fill="#a2bd96"/>
 <path d="M0 2 C14 6 30 14 42 22 C48 26 53 28 57 30.3 C50 33 45 35.6 43 35.6 C28 34 14 33 0 32.6 Z" fill="#84bd5a"/>
 <path d="M0 34 C8 31 16 28.5 26.5 28 C40 27.5 52 28 64.3 28.8 C76 31 86 36 94 44 C100 52 104 62 105 75 V90 H0 Z" fill="#4e8a4a"/>
 <path d="M40 36 C60 36 78 44 92 58 L98 90 H48 C46 70 44 52 40 36 Z" fill="#56914f" opacity="0.7"/>
 <path d="M0 52.2 C6 51.5 12 51.5 15.9 52.2 C22 55 27 58 29.5 61.3 C27 66 26 70 26.5 75 C27 80 28 85 29.5 90 H0 Z" fill="#72b350"/>
 <path d="M0 58 C6 57 12 58 18 61 C20 64 21 68 21 72 C21 78 22 84 23 90 H0 Z" fill="#3f7a3a" opacity="0.55"/>
 <path d="M49 0 H160 V26.5 C152 30 145 34 138 36 C124 33 112 29 102 25 C82 17 62 8 49 0 Z" fill="url(#gl)"/>
 <g stroke="#4f7a2c" stroke-width="0.8" fill="none" opacity="0.85">
  <path d="M138 36 C116 26 92 12 70 3"/><path d="M138 36 C122 22 104 8 92 0"/><path d="M138 36 C128 20 118 6 110 0"/><path d="M138 36 C134 22 130 8 128 0"/><path d="M138 36 C142 22 146 8 148 0"/><path d="M138 36 C148 28 154 18 160 12"/>
 </g>
 <path d="M93 58 L87 90" stroke="#5c9447" stroke-width="2.4"/>
 <path d="M132.5 34 C124 48 116 66 111 90" stroke="#5c9447" stroke-width="2.4" fill="none"/>
 <path d="M72 30.3 C80 22 92 17 102 17.4 C112 18 120 22 125 28 C127 33 127 37 125.7 40 C122 48 116 54 111 56.8 H84 C78 48 73 38 72 30.3 Z" fill="url(#gcup)"/>
 <path d="M80 32 C84 26 90 22 96 21 C93 28 92 36 93 44 C86 42 82 38 80 32 Z" fill="#f8c0d8"/>
 <path d="M108 21 C116 23 122 28 124 34 C122 42 118 48 112 52 C113 42 112 30 108 21 Z" fill="#ee7aac"/>
 <ellipse cx="101.5" cy="38.2" rx="11" ry="3.4" fill="#f2b02a"/>
 <path d="M48 45 C56 41 62 40 67 40 C74 40 80 42 86 44 V52 C82 55 78 57 75 57 C64 55 54 50 48 45 Z" fill="url(#gpl)"/>
 <path d="M152 66 C146 68 136 68 126.5 67.4 C120 65 114 62 111.3 59.8 C116 57 122 56 129.5 56 C138 58 146 62 152 66 Z" fill="url(#gpr)"/>
 <path d="M81 46 C88 44 98 44 105 46 C106 52 104 56 100 58.3 C94 59 86 58 83 55 C81 52 80 49 81 46 Z" fill="#ec5f97"/>
 <path d="M105 46 C114 44 124 44 132 46 C130 52 122 56 114 57 C110 56 106 52 105 46 Z" fill="#f49ec4"/>
</svg>

<!-- MINI END -->
<!-- BOTTOM TEXT -->
<div class="ln" style="top:542.9px">38</div>
<div class="ln" style="top:577.2px">39</div>
<div class="dl" style="top:576.2px"><span class="rt">↵</span></div>
<div class="ln" style="top:601.3px">40</div>
<div class="dl j" style="top:600.3px"><span class="lk">小说</span>和<span class="lk">微型小说</span>（小小说）。按照表现的内容可分为神话、<span class="lk">仙侠</span>、武侠、科幻、悬疑、</div>
<div class="ln" style="top:623.7px">41</div>
<div class="dl j" style="top:622.7px">古传、当代等小说。按照体制可分为章回体小说、日记体小说、书信体小说、自传体小</div>
<div class="ln" style="top:646.8px">42</div>
<div class="dl" style="top:645.8px">说。按照语言形式可分为文言小说和白话小说。<span class="rt">↵</span></div>
<div class="ln" style="top:670.3px">43</div>
<div class="dl j" style="top:669.3px">小说刻画人物的方法：心理描写、动作描写、语言描写、外貌描写、神态描写、侧面描</div>
<div class="ln" style="top:693.0px">44</div>
<div class="dl" style="top:692.0px">写。同时，小说是一种写作方法。①<span class="rt">↵</span></div>
<div class="ln" style="top:731.5px">45</div>
<div class="ln" style="top:762.0px">46</div>
<div class="dl" style="top:761.0px">诗歌是一种抒情言志的<span class="lk">文学体裁</span>。是用高度凝练的语言，生动形象地<span class="rt">↵</span></div>
<div class="ln" style="top:785.5px">47</div>
<div class="dl" style="top:784.5px">表达作者丰富情感，集中反映社会生活并具有一定节奏和韵律的文学体裁。<span class="rt">↵</span></div>
<div class="ln" style="top:809.0px">48</div>
<div class="dl" style="top:808.0px;letter-spacing:0.88px">《毛诗·大序》记载：“诗者，志之所之也，在心为志，发言为诗”。南宋严羽《<span class="lk">沧浪诗话</span>》</div>
<div class="dl" style="top:730.5px">小说与<span class="lk">诗歌</span>、<span class="lk">散文</span>、戏剧，并称“</div>
<div class="dl" style="left:498.0px;top:730.5px;letter-spacing:0">四</div>
<div class="py" style="left:505.0px;top:722px">sì</div>
<div class="dl" style="left:520.5px;top:730.5px;letter-spacing:0">大</div>
<div class="py" style="left:527.5px;top:722px">dà</div>
<div class="dl" style="left:546.5px;top:730.5px;letter-spacing:0">文</div>
<div class="py" style="left:553.5px;top:722px">wén</div>
<div class="dl" style="left:572.0px;top:730.5px;letter-spacing:0">学</div>
<div class="py" style="left:579.0px;top:722px">xué</div>
<div class="dl" style="left:597.5px;top:730.5px;letter-spacing:0">体</div>
<div class="py" style="left:604.5px;top:722px">tǐ</div>
<div class="dl" style="left:619.5px;top:730.5px;letter-spacing:0">裁</div>
<div class="py" style="left:626.5px;top:722px">cái</div>
<div class="a" style="left:515.0px;top:738px;width:1.5px;height:1.5px;background:#888"></div>
<div class="a" style="left:538.3px;top:738px;width:1.5px;height:1.5px;background:#888"></div>
<div class="a" style="left:566.8px;top:738px;width:1.5px;height:1.5px;background:#888"></div>
<div class="a" style="left:591.9px;top:738px;width:1.5px;height:1.5px;background:#888"></div>
<div class="a" style="left:614.7px;top:738px;width:1.5px;height:1.5px;background:#888"></div>
<div class="dl" style="left:635px;top:730.5px">”。（<span class="lk">戏剧</span>）<span class="rt">↵</span></div>
<svg class="a" style="left:560px;top:526px" width="70" height="24" viewBox="0 0 70 24">
<circle cx="13" cy="13" r="2.3" fill="#777"/>
<path d="M61 0 V12.5 H35 M43 4.5 L34.5 12.5 L43 20.5" fill="none" stroke="#777" stroke-width="2.6"/>
</svg>
<!-- TABS -->
<div class="a" style="left:395px;top:35px;width:49px;height:31px;background:#f3f3f3;border:1px solid #fcfcfc;border-bottom:0"></div>
<div class="tab" style="left:-6px">文件</div>
<div class="tab" style="left:50px">开始</div>
<div class="tab" style="left:101px">插入</div>
<div class="tab" style="left:152px">设计</div>
<div class="tab" style="left:203px">布局</div>
<div class="tab" style="left:253px">引用</div>
<div class="tab" style="left:305px">邮件</div>
<div class="tab" style="left:356px">审阅</div>
<div class="tab" style="left:406px;color:#2b579a">视图</div>
<div class="tab" style="left:458px">帮助</div>
<svg class="a" style="left:508px;top:40px" width="20" height="20" viewBox="0 0 20 20">
 <g fill="none" stroke="#fff" stroke-width="1.1">
  <path d="M7 14 C7 11 4 10 4 6.5 A5.5 5.5 0 0 1 15 6.5 C15 10 12 11 12 14 Z"/>
  <path d="M7.5 16 H11.5 M8 18 H11"/>
 </g>
</svg>
<div class="tab" style="left:537px">操作说明搜索</div>
<svg class="a" style="left:1044px;top:40px" width="20" height="20" viewBox="0 0 20 20">
 <g fill="none" stroke="#fff" stroke-width="1.1">
  <circle cx="9" cy="6.5" r="4.3"/>
  <path d="M2 18 C2.5 13.5 5 11.5 9 11.2"/>
  <path d="M14 12 V18.5 M10.8 15.3 H17.2"/>
 </g>
</svg>
<div class="tab" style="left:1064px">共享</div>

<!-- ARROW -->
<svg class="a" style="left:420px;top:95px" width="120" height="85" viewBox="420 95 120 85">
 <defs><filter id="sh" x="-20%" y="-20%" width="140%" height="140%"><feGaussianBlur in="SourceAlpha" stdDeviation="1.6"/><feOffset dx="1.5" dy="2" result="o"/><feComponentTransfer><feFuncA type="linear" slope="0.45"/></feComponentTransfer><feMerge><feMergeNode/><feMergeNode in="SourceGraphic"/></feMerge></filter></defs>
 <g filter="url(#sh)">
  <path d="M436 165.5 L504 123" stroke="#f00" stroke-width="4.6" stroke-linecap="round"/>
  <path d="M524.5 109.3 L506.8 129.2 L498.8 116.6 Z" fill="#f00"/>
 </g>
</svg>
</body></html>
